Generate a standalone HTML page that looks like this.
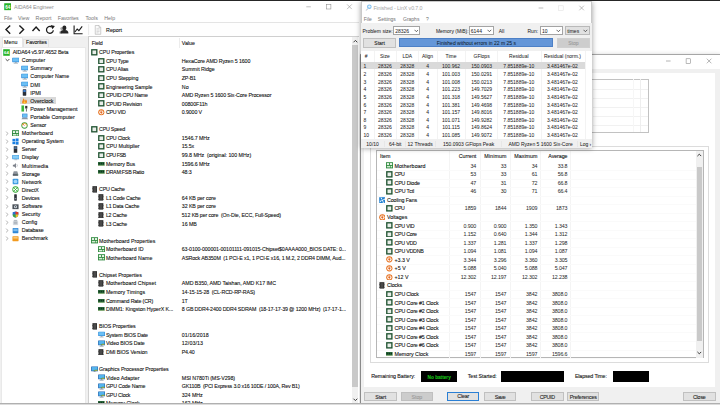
<!DOCTYPE html>
<html><head><meta charset="utf-8"><title>AIDA64 Engineer</title>
<style>
html,body{margin:0;padding:0;background:#fff;}
body{width:720px;height:405px;overflow:hidden;position:relative;font-family:"Liberation Sans",sans-serif;font-size:5.3px;color:#1c1c1c;}
.t{position:absolute;white-space:nowrap;line-height:8px;height:8px;-webkit-text-stroke:0.09px currentColor;text-shadow:0 0 0.4px rgba(0,0,0,.18);}
.r{position:absolute;box-sizing:border-box;}
.i{position:absolute;display:block;}
.g{color:#8e8e8e;-webkit-text-stroke:0;text-shadow:none;}
.m{color:#767676;-webkit-text-stroke:0;text-shadow:none;}
.btn{position:absolute;box-sizing:border-box;background:#e1e1e1;border:0.6px solid #c0c0c0;text-align:center;line-height:8px;white-space:nowrap;}
.win{position:absolute;box-sizing:border-box;overflow:hidden;}
.n{font-size:5.3px;}
.nn{-webkit-text-stroke:0.03px currentColor;text-shadow:none;color:#2a2a2a;}
.bt{-webkit-text-stroke:0.09px currentColor;}
.lx{-webkit-text-stroke:0.03px currentColor;text-shadow:none;font-size:5.0px;font-family:"Liberation Sans",sans-serif;}
</style></head><body>

<div class="win" style="left:359.5px;top:54px;width:361px;height:350px;background:#f0f0f0;border:1px solid #a6a6a6;border-left-color:#8a8a8a;box-shadow:0 1px 5px rgba(0,0,0,.22);"></div>
<div class="r " style="left:360.50px;top:55.00px;width:360.00px;height:14.20px;background:#fff;"></div>
<svg class="i" style="left:660px;top:56px;width:60px;height:12px" viewBox="0 0 60 12"><path d="M6.0 5.0 H10.6" stroke="#777" stroke-width="0.55" fill="none"/><rect x="26.1" y="2.8" width="4.5" height="4.5" stroke="#777" stroke-width="0.5" fill="none"/><path d="M46.8 2.7 L51.4 7.3 M51.4 2.7 L46.8 7.3" stroke="#777" stroke-width="0.55" fill="none"/></svg>
<div class="r " style="left:363.50px;top:73.00px;width:351.70px;height:314.30px;background:#fff;"></div>
<div class="r " style="left:370.00px;top:78.80px;width:278.80px;height:54.00px;background:#fff;border:0.6px solid #c2c2c2;"></div>
<div class="r " style="left:593.00px;top:89.30px;width:55.20px;height:0.50px;background:#f1f1f1;"></div>
<div class="r " style="left:593.00px;top:98.40px;width:55.20px;height:0.50px;background:#f1f1f1;"></div>
<div class="r " style="left:593.00px;top:107.20px;width:55.20px;height:0.50px;background:#f1f1f1;"></div>
<div class="r " style="left:593.00px;top:116.00px;width:55.20px;height:0.50px;background:#f1f1f1;"></div>
<div class="r " style="left:593.00px;top:124.90px;width:55.20px;height:0.50px;background:#f1f1f1;"></div>
<div class="r " style="left:640.00px;top:79.00px;width:0.50px;height:53.00px;background:#eeeeee;"></div>
<div class="r " style="left:632.70px;top:79.00px;width:0.50px;height:53.00px;background:#f6f6f6;"></div>
<div class="r " style="left:370.00px;top:145.60px;width:338.80px;height:217.60px;border:0.6px solid #dcdcdc;"></div>
<div class="r " style="left:376.00px;top:149.80px;width:327.50px;height:208.60px;background:#fff;border:0.6px solid #b6b6b6;"></div>
<div class="r " style="left:695.80px;top:150.50px;width:7.00px;height:207.20px;background:#f0f0f0;"></div>
<div class="r " style="left:696.60px;top:166.50px;width:5.80px;height:174.50px;background:#c9c9c9;"></div>
<svg class="i" style="left:696px;top:151px;width:6.6px;height:207px" viewBox="0 0 6.6 207"><path d="M1.4 5 L3.3 3.1 L5.2 5" stroke="#3c3c3c" stroke-width="1.0" fill="none"/><path d="M1.4 201 L3.3 202.9 L5.2 201" stroke="#3c3c3c" stroke-width="1.0" fill="none"/></svg>
<div class="r " style="left:449.00px;top:150.50px;width:0.50px;height:207.00px;background:#f4f4f4;"></div>
<div class="r " style="left:479.50px;top:150.50px;width:0.50px;height:207.00px;background:#f4f4f4;"></div>
<div class="r " style="left:509.80px;top:150.50px;width:0.50px;height:207.00px;background:#f4f4f4;"></div>
<div class="r " style="left:540.40px;top:150.50px;width:0.50px;height:207.00px;background:#f4f4f4;"></div>
<div class="r " style="left:570.00px;top:150.50px;width:0.50px;height:207.00px;background:#f4f4f4;"></div>
<div class="t " style="top:152.20px;left:380.00px;letter-spacing:0.058px;">Item</div>
<div class="t " style="top:152.20px;left:376.30px;width:100px;text-align:right;letter-spacing:-0.021px;margin-left:-0.021px;">Current</div>
<div class="t " style="top:152.20px;left:406.50px;width:100px;text-align:right;letter-spacing:0.135px;margin-left:0.135px;">Minimum</div>
<div class="t " style="top:152.20px;left:437.50px;width:100px;text-align:right;letter-spacing:0.046px;margin-left:0.046px;">Maximum</div>
<div class="t " style="top:152.20px;left:467.50px;width:100px;text-align:right;letter-spacing:-0.070px;margin-left:-0.070px;">Average</div>
<div class="r " style="left:376.70px;top:169.97px;width:319.00px;height:0.50px;background:#fafafa;"></div>
<svg class="i" style="left:386.20px;top:162.40px;width:7.00px;height:6.60px" viewBox="0 0 16 16" preserveAspectRatio="none"><rect x="0" y="0.5" width="16" height="15" fill="#2f8a3e"/><rect x="2" y="2.6" width="5" height="4.6" fill="#eaf6ea"/><rect x="9" y="2.6" width="5" height="4.6" fill="#eaf6ea"/><rect x="2" y="9.4" width="8" height="3.8" fill="#d4ecd4"/><rect x="11.4" y="9.4" width="2.6" height="3.8" fill="#d4ecd4"/></svg>
<div class="t " style="top:161.70px;left:394.50px;letter-spacing:0.100px;">Motherboard</div>
<div class="t n nn" style="top:161.70px;left:376.30px;width:100px;text-align:right;letter-spacing:-0.091px;margin-left:-0.091px;">34</div>
<div class="t n nn" style="top:161.70px;left:406.50px;width:100px;text-align:right;letter-spacing:-0.091px;margin-left:-0.091px;">33</div>
<div class="t n nn" style="top:161.70px;left:437.50px;width:100px;text-align:right;letter-spacing:-0.091px;margin-left:-0.091px;">34</div>
<div class="t n nn" style="top:161.70px;left:467.50px;width:100px;text-align:right;letter-spacing:-0.149px;margin-left:-0.149px;">33.8</div>
<div class="r " style="left:376.70px;top:178.53px;width:319.00px;height:0.50px;background:#fafafa;"></div>
<svg class="i" style="left:386.30px;top:170.90px;width:6.70px;height:6.70px" viewBox="0 0 16 16" preserveAspectRatio="none"><rect x="0.3" y="0.3" width="15.4" height="15.4" fill="#1f5230"/><rect x="3.5" y="3.5" width="9" height="9" fill="#e9eee9"/></svg>
<div class="t " style="top:170.25px;left:394.50px;letter-spacing:-0.434px;">CPU</div>
<div class="t n nn" style="top:170.25px;left:376.30px;width:100px;text-align:right;letter-spacing:-0.091px;margin-left:-0.091px;">53</div>
<div class="t n nn" style="top:170.25px;left:406.50px;width:100px;text-align:right;letter-spacing:-0.091px;margin-left:-0.091px;">33</div>
<div class="t n nn" style="top:170.25px;left:437.50px;width:100px;text-align:right;letter-spacing:-0.091px;margin-left:-0.091px;">61</div>
<div class="t n nn" style="top:170.25px;left:467.50px;width:100px;text-align:right;letter-spacing:-0.149px;margin-left:-0.149px;">56.8</div>
<div class="r " style="left:376.70px;top:187.07px;width:319.00px;height:0.50px;background:#fafafa;"></div>
<svg class="i" style="left:386.30px;top:179.45px;width:6.70px;height:6.70px" viewBox="0 0 16 16" preserveAspectRatio="none"><rect x="0.3" y="0.3" width="15.4" height="15.4" fill="#1f5230"/><rect x="3.5" y="3.5" width="9" height="9" fill="#e9eee9"/></svg>
<div class="t " style="top:178.80px;left:394.50px;letter-spacing:-0.131px;">CPU Diode</div>
<div class="t n nn" style="top:178.80px;left:376.30px;width:100px;text-align:right;letter-spacing:-0.091px;margin-left:-0.091px;">47</div>
<div class="t n nn" style="top:178.80px;left:406.50px;width:100px;text-align:right;letter-spacing:-0.091px;margin-left:-0.091px;">31</div>
<div class="t n nn" style="top:178.80px;left:437.50px;width:100px;text-align:right;letter-spacing:-0.091px;margin-left:-0.091px;">72</div>
<div class="t n nn" style="top:178.80px;left:467.50px;width:100px;text-align:right;letter-spacing:-0.149px;margin-left:-0.149px;">66.8</div>
<div class="r " style="left:376.70px;top:195.62px;width:319.00px;height:0.50px;background:#fafafa;"></div>
<svg class="i" style="left:386.30px;top:188.00px;width:6.70px;height:6.70px" viewBox="0 0 16 16" preserveAspectRatio="none"><rect x="0.3" y="0.3" width="15.4" height="15.4" fill="#1f5230"/><rect x="3.5" y="3.5" width="9" height="9" fill="#e9eee9"/></svg>
<div class="t " style="top:187.35px;left:394.50px;letter-spacing:-0.109px;">CPU Tctl</div>
<div class="t n nn" style="top:187.35px;left:376.30px;width:100px;text-align:right;letter-spacing:-0.091px;margin-left:-0.091px;">46</div>
<div class="t n nn" style="top:187.35px;left:406.50px;width:100px;text-align:right;letter-spacing:-0.091px;margin-left:-0.091px;">30</div>
<div class="t n nn" style="top:187.35px;left:437.50px;width:100px;text-align:right;letter-spacing:-0.091px;margin-left:-0.091px;">71</div>
<div class="t n nn" style="top:187.35px;left:467.50px;width:100px;text-align:right;letter-spacing:-0.149px;margin-left:-0.149px;">66.4</div>
<div class="r " style="left:376.70px;top:204.17px;width:319.00px;height:0.50px;background:#fafafa;"></div>
<svg class="i" style="left:378.80px;top:196.55px;width:6.70px;height:6.70px" viewBox="0 0 16 16" preserveAspectRatio="none"><rect x="0.5" y="0.5" width="15" height="15" fill="#1f7fd0"/><path d="M8 8 L3 2 L7 2 Z M8 8 L14 3 L14 7 Z M8 8 L13 14 L9 14 Z M8 8 L2 13 L2 9 Z" fill="#e8f4ff"/><circle cx="8" cy="8" r="1.6" fill="#fff"/></svg>
<div class="t " style="top:195.90px;left:387.00px;letter-spacing:-0.089px;">Cooling Fans</div>
<div class="r " style="left:376.70px;top:212.72px;width:319.00px;height:0.50px;background:#fafafa;"></div>
<svg class="i" style="left:386.30px;top:205.10px;width:6.70px;height:6.70px" viewBox="0 0 16 16" preserveAspectRatio="none"><rect x="0.3" y="0.3" width="15.4" height="15.4" fill="#1f5230"/><rect x="3.5" y="3.5" width="9" height="9" fill="#e9eee9"/></svg>
<div class="t " style="top:204.45px;left:394.50px;letter-spacing:-0.434px;">CPU</div>
<div class="t n nn" style="top:204.45px;left:376.30px;width:100px;text-align:right;letter-spacing:-0.091px;margin-left:-0.091px;">1859</div>
<div class="t n nn" style="top:204.45px;left:406.50px;width:100px;text-align:right;letter-spacing:-0.091px;margin-left:-0.091px;">1844</div>
<div class="t n nn" style="top:204.45px;left:437.50px;width:100px;text-align:right;letter-spacing:-0.091px;margin-left:-0.091px;">1909</div>
<div class="t n nn" style="top:204.45px;left:467.50px;width:100px;text-align:right;letter-spacing:-0.091px;margin-left:-0.091px;">1873</div>
<div class="r " style="left:376.70px;top:221.28px;width:319.00px;height:0.50px;background:#fafafa;"></div>
<svg class="i" style="left:378.80px;top:213.65px;width:6.70px;height:6.70px" viewBox="0 0 16 16" preserveAspectRatio="none"><circle cx="8" cy="8" r="7.4" fill="#e66f1c"/><circle cx="8" cy="8" r="5.2" fill="#fdf1e6"/><path d="M8.6 2.6 L4.6 9 H7.6 L6.8 13.4 L11.4 6.8 H8.4 Z" fill="#e0601a"/></svg>
<div class="t " style="top:213.00px;left:387.00px;letter-spacing:-0.001px;">Voltages</div>
<div class="r " style="left:376.70px;top:229.83px;width:319.00px;height:0.50px;background:#fafafa;"></div>
<svg class="i" style="left:386.30px;top:222.20px;width:6.70px;height:6.70px" viewBox="0 0 16 16" preserveAspectRatio="none"><rect x="0.3" y="0.3" width="15.4" height="15.4" fill="#1f5230"/><rect x="3.5" y="3.5" width="9" height="9" fill="#e9eee9"/></svg>
<div class="t " style="top:221.55px;left:394.50px;letter-spacing:-0.247px;">CPU VID</div>
<div class="t n nn" style="top:221.55px;left:376.30px;width:100px;text-align:right;letter-spacing:-0.137px;margin-left:-0.137px;">0.900</div>
<div class="t n nn" style="top:221.55px;left:406.50px;width:100px;text-align:right;letter-spacing:-0.137px;margin-left:-0.137px;">0.900</div>
<div class="t n nn" style="top:221.55px;left:437.50px;width:100px;text-align:right;letter-spacing:-0.137px;margin-left:-0.137px;">1.350</div>
<div class="t n nn" style="top:221.55px;left:467.50px;width:100px;text-align:right;letter-spacing:-0.137px;margin-left:-0.137px;">1.343</div>
<div class="r " style="left:376.70px;top:238.38px;width:319.00px;height:0.50px;background:#fafafa;"></div>
<svg class="i" style="left:386.30px;top:230.75px;width:6.70px;height:6.70px" viewBox="0 0 16 16" preserveAspectRatio="none"><rect x="0.3" y="0.3" width="15.4" height="15.4" fill="#1f5230"/><rect x="3.5" y="3.5" width="9" height="9" fill="#e9eee9"/></svg>
<div class="t " style="top:230.10px;left:394.50px;letter-spacing:-0.226px;">CPU Core</div>
<div class="t n nn" style="top:230.10px;left:376.30px;width:100px;text-align:right;letter-spacing:-0.137px;margin-left:-0.137px;">1.152</div>
<div class="t n nn" style="top:230.10px;left:406.50px;width:100px;text-align:right;letter-spacing:-0.137px;margin-left:-0.137px;">0.640</div>
<div class="t n nn" style="top:230.10px;left:437.50px;width:100px;text-align:right;letter-spacing:-0.137px;margin-left:-0.137px;">1.344</div>
<div class="t n nn" style="top:230.10px;left:467.50px;width:100px;text-align:right;letter-spacing:-0.137px;margin-left:-0.137px;">1.312</div>
<div class="r " style="left:376.70px;top:246.92px;width:319.00px;height:0.50px;background:#fafafa;"></div>
<svg class="i" style="left:386.30px;top:239.30px;width:6.70px;height:6.70px" viewBox="0 0 16 16" preserveAspectRatio="none"><rect x="0.3" y="0.3" width="15.4" height="15.4" fill="#1f5230"/><rect x="3.5" y="3.5" width="9" height="9" fill="#e9eee9"/></svg>
<div class="t " style="top:238.65px;left:394.50px;letter-spacing:-0.254px;">CPU VDD</div>
<div class="t n nn" style="top:238.65px;left:376.30px;width:100px;text-align:right;letter-spacing:-0.137px;margin-left:-0.137px;">1.337</div>
<div class="t n nn" style="top:238.65px;left:406.50px;width:100px;text-align:right;letter-spacing:-0.137px;margin-left:-0.137px;">1.281</div>
<div class="t n nn" style="top:238.65px;left:437.50px;width:100px;text-align:right;letter-spacing:-0.137px;margin-left:-0.137px;">1.337</div>
<div class="t n nn" style="top:238.65px;left:467.50px;width:100px;text-align:right;letter-spacing:-0.137px;margin-left:-0.137px;">1.298</div>
<div class="r " style="left:376.70px;top:255.47px;width:319.00px;height:0.50px;background:#fafafa;"></div>
<svg class="i" style="left:386.30px;top:247.85px;width:6.70px;height:6.70px" viewBox="0 0 16 16" preserveAspectRatio="none"><rect x="0.3" y="0.3" width="15.4" height="15.4" fill="#1f5230"/><rect x="3.5" y="3.5" width="9" height="9" fill="#e9eee9"/></svg>
<div class="t " style="top:247.20px;left:394.50px;letter-spacing:-0.238px;">CPU VDDNB</div>
<div class="t n nn" style="top:247.20px;left:376.30px;width:100px;text-align:right;letter-spacing:-0.137px;margin-left:-0.137px;">1.094</div>
<div class="t n nn" style="top:247.20px;left:406.50px;width:100px;text-align:right;letter-spacing:-0.137px;margin-left:-0.137px;">1.081</div>
<div class="t n nn" style="top:247.20px;left:437.50px;width:100px;text-align:right;letter-spacing:-0.137px;margin-left:-0.137px;">1.094</div>
<div class="t n nn" style="top:247.20px;left:467.50px;width:100px;text-align:right;letter-spacing:-0.137px;margin-left:-0.137px;">1.087</div>
<div class="r " style="left:376.70px;top:264.02px;width:319.00px;height:0.50px;background:#fafafa;"></div>
<svg class="i" style="left:386.30px;top:256.40px;width:6.70px;height:6.70px" viewBox="0 0 16 16" preserveAspectRatio="none"><circle cx="8" cy="8" r="7.4" fill="#e66f1c"/><circle cx="8" cy="8" r="5.2" fill="#fdf1e6"/><path d="M8.6 2.6 L4.6 9 H7.6 L6.8 13.4 L11.4 6.8 H8.4 Z" fill="#e0601a"/></svg>
<div class="t " style="top:255.75px;left:394.50px;letter-spacing:-0.038px;">+3.3 V</div>
<div class="t n nn" style="top:255.75px;left:376.30px;width:100px;text-align:right;letter-spacing:-0.137px;margin-left:-0.137px;">3.344</div>
<div class="t n nn" style="top:255.75px;left:406.50px;width:100px;text-align:right;letter-spacing:-0.137px;margin-left:-0.137px;">3.296</div>
<div class="t n nn" style="top:255.75px;left:437.50px;width:100px;text-align:right;letter-spacing:-0.137px;margin-left:-0.137px;">3.360</div>
<div class="t n nn" style="top:255.75px;left:467.50px;width:100px;text-align:right;letter-spacing:-0.137px;margin-left:-0.137px;">3.305</div>
<div class="r " style="left:376.70px;top:272.57px;width:319.00px;height:0.50px;background:#fafafa;"></div>
<svg class="i" style="left:386.30px;top:264.95px;width:6.70px;height:6.70px" viewBox="0 0 16 16" preserveAspectRatio="none"><circle cx="8" cy="8" r="7.4" fill="#e66f1c"/><circle cx="8" cy="8" r="5.2" fill="#fdf1e6"/><path d="M8.6 2.6 L4.6 9 H7.6 L6.8 13.4 L11.4 6.8 H8.4 Z" fill="#e0601a"/></svg>
<div class="t " style="top:264.30px;left:394.50px;letter-spacing:0.047px;">+5 V</div>
<div class="t n nn" style="top:264.30px;left:376.30px;width:100px;text-align:right;letter-spacing:-0.137px;margin-left:-0.137px;">5.088</div>
<div class="t n nn" style="top:264.30px;left:406.50px;width:100px;text-align:right;letter-spacing:-0.137px;margin-left:-0.137px;">5.040</div>
<div class="t n nn" style="top:264.30px;left:437.50px;width:100px;text-align:right;letter-spacing:-0.137px;margin-left:-0.137px;">5.088</div>
<div class="t n nn" style="top:264.30px;left:467.50px;width:100px;text-align:right;letter-spacing:-0.137px;margin-left:-0.137px;">5.047</div>
<div class="r " style="left:376.70px;top:281.12px;width:319.00px;height:0.50px;background:#fafafa;"></div>
<svg class="i" style="left:386.30px;top:273.50px;width:6.70px;height:6.70px" viewBox="0 0 16 16" preserveAspectRatio="none"><circle cx="8" cy="8" r="7.4" fill="#e66f1c"/><circle cx="8" cy="8" r="5.2" fill="#fdf1e6"/><path d="M8.6 2.6 L4.6 9 H7.6 L6.8 13.4 L11.4 6.8 H8.4 Z" fill="#e0601a"/></svg>
<div class="t " style="top:272.85px;left:394.50px;letter-spacing:0.020px;">+12 V</div>
<div class="t n nn" style="top:272.85px;left:376.30px;width:100px;text-align:right;letter-spacing:-0.129px;margin-left:-0.129px;">12.302</div>
<div class="t n nn" style="top:272.85px;left:406.50px;width:100px;text-align:right;letter-spacing:-0.129px;margin-left:-0.129px;">12.197</div>
<div class="t n nn" style="top:272.85px;left:437.50px;width:100px;text-align:right;letter-spacing:-0.129px;margin-left:-0.129px;">12.302</div>
<div class="t n nn" style="top:272.85px;left:467.50px;width:100px;text-align:right;letter-spacing:-0.129px;margin-left:-0.129px;">12.238</div>
<div class="r " style="left:376.70px;top:289.67px;width:319.00px;height:0.50px;background:#fafafa;"></div>
<svg class="i" style="left:379.20px;top:282.00px;width:5.80px;height:6.80px" viewBox="0 0 16 16" preserveAspectRatio="none"><rect x="1.8" y="0.5" width="12.4" height="15" fill="#2b2b2b"/><rect x="0.2" y="1.6" width="15.6" height="1.7" fill="#3d3d3d"/><rect x="0.2" y="5" width="15.6" height="1.7" fill="#3d3d3d"/><rect x="0.2" y="8.4" width="15.6" height="1.7" fill="#3d3d3d"/><rect x="0.2" y="11.8" width="15.6" height="1.7" fill="#3d3d3d"/><rect x="4.6" y="2.5" width="6.8" height="11" fill="#4a4a4a"/></svg>
<div class="t " style="top:281.40px;left:387.00px;letter-spacing:-0.150px;">Clocks</div>
<div class="r " style="left:376.70px;top:298.22px;width:319.00px;height:0.50px;background:#fafafa;"></div>
<svg class="i" style="left:386.30px;top:290.60px;width:6.70px;height:6.70px" viewBox="0 0 16 16" preserveAspectRatio="none"><rect x="0.3" y="0.3" width="15.4" height="15.4" fill="#1f5230"/><rect x="3.5" y="3.5" width="9" height="9" fill="#e9eee9"/></svg>
<div class="t " style="top:289.95px;left:394.50px;letter-spacing:-0.202px;">CPU Clock</div>
<div class="t n nn" style="top:289.95px;left:376.30px;width:100px;text-align:right;letter-spacing:-0.091px;margin-left:-0.091px;">1547</div>
<div class="t n nn" style="top:289.95px;left:406.50px;width:100px;text-align:right;letter-spacing:-0.091px;margin-left:-0.091px;">1547</div>
<div class="t n nn" style="top:289.95px;left:437.50px;width:100px;text-align:right;letter-spacing:-0.091px;margin-left:-0.091px;">3842</div>
<div class="t n nn" style="top:289.95px;left:467.50px;width:100px;text-align:right;letter-spacing:-0.129px;margin-left:-0.129px;">3808.0</div>
<div class="r " style="left:376.70px;top:306.77px;width:319.00px;height:0.50px;background:#fafafa;"></div>
<svg class="i" style="left:386.30px;top:299.15px;width:6.70px;height:6.70px" viewBox="0 0 16 16" preserveAspectRatio="none"><rect x="0.3" y="0.3" width="15.4" height="15.4" fill="#1f5230"/><rect x="3.5" y="3.5" width="9" height="9" fill="#e9eee9"/></svg>
<div class="t " style="top:298.50px;left:394.50px;letter-spacing:-0.133px;">CPU Core #1 Clock</div>
<div class="t n nn" style="top:298.50px;left:376.30px;width:100px;text-align:right;letter-spacing:-0.091px;margin-left:-0.091px;">1547</div>
<div class="t n nn" style="top:298.50px;left:406.50px;width:100px;text-align:right;letter-spacing:-0.091px;margin-left:-0.091px;">1547</div>
<div class="t n nn" style="top:298.50px;left:437.50px;width:100px;text-align:right;letter-spacing:-0.091px;margin-left:-0.091px;">3842</div>
<div class="t n nn" style="top:298.50px;left:467.50px;width:100px;text-align:right;letter-spacing:-0.129px;margin-left:-0.129px;">3808.0</div>
<div class="r " style="left:376.70px;top:315.32px;width:319.00px;height:0.50px;background:#fafafa;"></div>
<svg class="i" style="left:386.30px;top:307.70px;width:6.70px;height:6.70px" viewBox="0 0 16 16" preserveAspectRatio="none"><rect x="0.3" y="0.3" width="15.4" height="15.4" fill="#1f5230"/><rect x="3.5" y="3.5" width="9" height="9" fill="#e9eee9"/></svg>
<div class="t " style="top:307.05px;left:394.50px;letter-spacing:-0.133px;">CPU Core #2 Clock</div>
<div class="t n nn" style="top:307.05px;left:376.30px;width:100px;text-align:right;letter-spacing:-0.091px;margin-left:-0.091px;">1547</div>
<div class="t n nn" style="top:307.05px;left:406.50px;width:100px;text-align:right;letter-spacing:-0.091px;margin-left:-0.091px;">1547</div>
<div class="t n nn" style="top:307.05px;left:437.50px;width:100px;text-align:right;letter-spacing:-0.091px;margin-left:-0.091px;">3842</div>
<div class="t n nn" style="top:307.05px;left:467.50px;width:100px;text-align:right;letter-spacing:-0.129px;margin-left:-0.129px;">3808.0</div>
<div class="r " style="left:376.70px;top:323.88px;width:319.00px;height:0.50px;background:#fafafa;"></div>
<svg class="i" style="left:386.30px;top:316.25px;width:6.70px;height:6.70px" viewBox="0 0 16 16" preserveAspectRatio="none"><rect x="0.3" y="0.3" width="15.4" height="15.4" fill="#1f5230"/><rect x="3.5" y="3.5" width="9" height="9" fill="#e9eee9"/></svg>
<div class="t " style="top:315.60px;left:394.50px;letter-spacing:-0.133px;">CPU Core #3 Clock</div>
<div class="t n nn" style="top:315.60px;left:376.30px;width:100px;text-align:right;letter-spacing:-0.091px;margin-left:-0.091px;">1547</div>
<div class="t n nn" style="top:315.60px;left:406.50px;width:100px;text-align:right;letter-spacing:-0.091px;margin-left:-0.091px;">1547</div>
<div class="t n nn" style="top:315.60px;left:437.50px;width:100px;text-align:right;letter-spacing:-0.091px;margin-left:-0.091px;">3842</div>
<div class="t n nn" style="top:315.60px;left:467.50px;width:100px;text-align:right;letter-spacing:-0.129px;margin-left:-0.129px;">3808.0</div>
<div class="r " style="left:376.70px;top:332.42px;width:319.00px;height:0.50px;background:#fafafa;"></div>
<svg class="i" style="left:386.30px;top:324.80px;width:6.70px;height:6.70px" viewBox="0 0 16 16" preserveAspectRatio="none"><rect x="0.3" y="0.3" width="15.4" height="15.4" fill="#1f5230"/><rect x="3.5" y="3.5" width="9" height="9" fill="#e9eee9"/></svg>
<div class="t " style="top:324.15px;left:394.50px;letter-spacing:-0.133px;">CPU Core #4 Clock</div>
<div class="t n nn" style="top:324.15px;left:376.30px;width:100px;text-align:right;letter-spacing:-0.091px;margin-left:-0.091px;">1547</div>
<div class="t n nn" style="top:324.15px;left:406.50px;width:100px;text-align:right;letter-spacing:-0.091px;margin-left:-0.091px;">1547</div>
<div class="t n nn" style="top:324.15px;left:437.50px;width:100px;text-align:right;letter-spacing:-0.091px;margin-left:-0.091px;">3842</div>
<div class="t n nn" style="top:324.15px;left:467.50px;width:100px;text-align:right;letter-spacing:-0.129px;margin-left:-0.129px;">3808.0</div>
<div class="r " style="left:376.70px;top:340.97px;width:319.00px;height:0.50px;background:#fafafa;"></div>
<svg class="i" style="left:386.30px;top:333.35px;width:6.70px;height:6.70px" viewBox="0 0 16 16" preserveAspectRatio="none"><rect x="0.3" y="0.3" width="15.4" height="15.4" fill="#1f5230"/><rect x="3.5" y="3.5" width="9" height="9" fill="#e9eee9"/></svg>
<div class="t " style="top:332.70px;left:394.50px;letter-spacing:-0.133px;">CPU Core #5 Clock</div>
<div class="t n nn" style="top:332.70px;left:376.30px;width:100px;text-align:right;letter-spacing:-0.091px;margin-left:-0.091px;">1547</div>
<div class="t n nn" style="top:332.70px;left:406.50px;width:100px;text-align:right;letter-spacing:-0.091px;margin-left:-0.091px;">1547</div>
<div class="t n nn" style="top:332.70px;left:437.50px;width:100px;text-align:right;letter-spacing:-0.091px;margin-left:-0.091px;">3842</div>
<div class="t n nn" style="top:332.70px;left:467.50px;width:100px;text-align:right;letter-spacing:-0.129px;margin-left:-0.129px;">3808.0</div>
<div class="r " style="left:376.70px;top:349.52px;width:319.00px;height:0.50px;background:#fafafa;"></div>
<svg class="i" style="left:386.30px;top:341.90px;width:6.70px;height:6.70px" viewBox="0 0 16 16" preserveAspectRatio="none"><rect x="0.3" y="0.3" width="15.4" height="15.4" fill="#1f5230"/><rect x="3.5" y="3.5" width="9" height="9" fill="#e9eee9"/></svg>
<div class="t " style="top:341.25px;left:394.50px;letter-spacing:-0.133px;">CPU Core #6 Clock</div>
<div class="t n nn" style="top:341.25px;left:376.30px;width:100px;text-align:right;letter-spacing:-0.091px;margin-left:-0.091px;">1547</div>
<div class="t n nn" style="top:341.25px;left:406.50px;width:100px;text-align:right;letter-spacing:-0.091px;margin-left:-0.091px;">1547</div>
<div class="t n nn" style="top:341.25px;left:437.50px;width:100px;text-align:right;letter-spacing:-0.091px;margin-left:-0.091px;">3842</div>
<div class="t n nn" style="top:341.25px;left:467.50px;width:100px;text-align:right;letter-spacing:-0.129px;margin-left:-0.129px;">3808.0</div>
<div class="r " style="left:376.70px;top:358.07px;width:319.00px;height:0.50px;background:#fafafa;"></div>
<svg class="i" style="left:386.30px;top:351.90px;width:6.60px;height:4.20px" viewBox="0 0 16 16" preserveAspectRatio="none"><rect x="0" y="0" width="16" height="13" fill="#2c6a3e"/><rect x="0" y="13" width="16" height="3" fill="#6c9a55"/><rect x="1.5" y="3" width="3" height="6" fill="#0f3319"/><rect x="6.5" y="3" width="3" height="6" fill="#0f3319"/><rect x="11.5" y="3" width="3" height="6" fill="#0f3319"/></svg>
<div class="t " style="top:349.80px;left:394.50px;letter-spacing:-0.005px;">Memory Clock</div>
<div class="t n nn" style="top:349.80px;left:376.30px;width:100px;text-align:right;letter-spacing:-0.091px;margin-left:-0.091px;">1597</div>
<div class="t n nn" style="top:349.80px;left:406.50px;width:100px;text-align:right;letter-spacing:-0.091px;margin-left:-0.091px;">1597</div>
<div class="t n nn" style="top:349.80px;left:437.50px;width:100px;text-align:right;letter-spacing:-0.091px;margin-left:-0.091px;">1597</div>
<div class="t n nn" style="top:349.80px;left:467.50px;width:100px;text-align:right;letter-spacing:-0.129px;margin-left:-0.129px;">1596.6</div>
<div class="t " style="top:372.30px;left:371.20px;letter-spacing:-0.061px;">Remaining Battery:</div>
<div class="r " style="left:421.00px;top:371.00px;width:36.40px;height:10.60px;background:#000;"></div>
<div class="t " style="top:374.00px;left:389.20px;width:100px;text-align:center;color:#17c417;font-weight:bold;font-size:4.7px;">No battery</div>
<div class="t " style="top:372.30px;left:467.70px;letter-spacing:-0.056px;">Test Started:</div>
<div class="r " style="left:501.30px;top:371.00px;width:63.20px;height:10.60px;background:#000;"></div>
<div class="t " style="top:372.30px;left:574.90px;letter-spacing:-0.129px;">Elapsed Time:</div>
<div class="r " style="left:613.00px;top:371.00px;width:36.20px;height:10.60px;background:#000;"></div>
<div class="btn" style="left:364.40px;top:391.80px;width:32.60px;height:8.90px;"><span class="bt" style="letter-spacing:-0.050px;">Start</span></div>
<div class="btn" style="left:400.50px;top:391.80px;width:32.70px;height:8.90px;background:#cccccc;border-color:#bfbfbf;color:#9a9a9a;"><span class="bt" style="letter-spacing:-0.018px;">Stop</span></div>
<div class="btn" style="left:446.90px;top:391.80px;width:32.60px;height:8.90px;border:1px solid #2a7fd4;line-height:7.4px;"><span class="bt" style="letter-spacing:-0.158px;">Clear</span></div>
<div class="btn" style="left:483.90px;top:391.80px;width:32.40px;height:8.90px;"><span class="bt" style="letter-spacing:-0.315px;">Save</span></div>
<div class="btn" style="left:530.80px;top:391.80px;width:33.00px;height:8.90px;"><span class="bt" style="letter-spacing:-0.295px;">CPUID</span></div>
<div class="btn" style="left:567.20px;top:391.80px;width:32.00px;height:8.90px;"><span class="bt" style="letter-spacing:-0.135px;">Preferences</span></div>
<div class="btn" style="left:682.80px;top:391.80px;width:33.00px;height:8.90px;"><span class="bt" style="letter-spacing:-0.172px;">Close</span></div>
<div class="win" style="left:0;top:0;width:359.3px;height:405px;background:#fff;"></div>
<div class="r " style="left:0.00px;top:0.00px;width:720.00px;height:1.00px;background:#262626;"></div>
<svg class="i" style="left:3.60px;top:3.20px;width:7.40px;height:7.40px" viewBox="0 0 16 16" preserveAspectRatio="none"><rect x="0.5" y="0.5" width="15" height="15" fill="#26b326"/><text x="8" y="12" font-family="Liberation Sans" font-weight="bold" font-size="10" fill="#fff" text-anchor="middle">64</text></svg>
<div class="t g" style="top:2.90px;left:14.00px;letter-spacing:-0.091px;">AIDA64 Engineer</div>
<svg class="i" style="left:300px;top:1px;width:60px;height:12px" viewBox="0 0 60 12"><path d="M6.3 5.8 H10.8" stroke="#8a8a8a" stroke-width="0.55" fill="none"/><rect x="26.4" y="3.5" width="4.5" height="4.5" stroke="#8a8a8a" stroke-width="0.55" fill="none"/><path d="M47.1 3.4 L51.8 8.1 M51.8 3.4 L47.1 8.1" stroke="#8a8a8a" stroke-width="0.55" fill="none"/></svg>
<div class="t m" style="top:14.30px;left:4.00px;letter-spacing:-0.154px;">File</div>
<div class="t m" style="top:14.30px;left:18.00px;letter-spacing:-0.052px;">View</div>
<div class="t m" style="top:14.30px;left:35.60px;letter-spacing:-0.018px;">Report</div>
<div class="t m" style="top:14.30px;left:57.80px;letter-spacing:-0.103px;">Favorites</div>
<div class="t m" style="top:14.30px;left:85.40px;letter-spacing:0.030px;">Tools</div>
<div class="t m" style="top:14.30px;left:104.20px;letter-spacing:0.008px;">Help</div>
<div class="r " style="left:0.00px;top:22.10px;width:359.00px;height:0.50px;background:#e4e4e4;"></div>
<div class="r " style="left:0.00px;top:22.60px;width:359.00px;height:13.80px;background:#fefefe;"></div>
<svg class="i" style="left:0;top:23px;width:130px;height:13px" viewBox="0 0 130 13">
<g stroke="#1b1b1b" stroke-width="1.4" fill="none" stroke-linecap="butt">
<path d="M10.2 2.5 L6.0 6.6 L10.2 10.7"/>
<path d="M19.4 2.5 L23.6 6.6 L19.4 10.7"/>
<path d="M32.5 8.0 L36.1 4.1 L39.7 8.0"/>
<path d="M51.6 3.9 A3.4 3.4 0 1 0 53.3 7.2" stroke-width="1.25"/>
<path d="M74.1 2.4 V10.7 H82.6" stroke-width="1.1"/>
<path d="M74.9 9.0 L77.2 6.0 L78.9 7.6 L82.2 3.4" stroke-width="1.1"/>
</g>
<path d="M50.6 1.9 L54.9 3.0 L52.4 6.3 Z" fill="#1b1b1b"/>
<g fill="#8d8d8d" opacity="0.75"><circle cx="62.0" cy="5.6" r="1.7"/><path d="M59.2 10.6 C59.2 8.2 60.2 7.6 62 7.6 L62 10.6 Z"/></g>
<g fill="#262626"><ellipse cx="64.4" cy="4.9" rx="2.0" ry="2.4"/><path d="M60.4 10.6 C60.4 7.6 62 7.0 64.4 7.0 C66.8 7.0 68.4 7.6 68.4 10.6 Z"/></g>
<path d="M88.6 1.2 V12" stroke="#d4d4d4" stroke-width="0.5"/>
</svg>
<svg class="i" style="left:94.00px;top:24.90px;width:8.00px;height:9.80px" viewBox="0 0 16 16" preserveAspectRatio="none"><path d="M2.5 0.8 H10 L13.5 4.3 V15.2 H2.5 Z" fill="#fafafa" stroke="#a8a8a8" stroke-width="1.0"/><path d="M5 6 H11 M5 8.3 H11 M5 10.6 H11 M5 12.8 H9" stroke="#bdbdbd" stroke-width="0.9"/><path d="M10 0.8 V4.3 H13.5" fill="none" stroke="#a8a8a8" stroke-width="0.8"/></svg>
<div class="t " style="top:25.70px;left:106.10px;letter-spacing:-0.018px;">Report</div>
<div class="r " style="left:0.00px;top:36.40px;width:88.50px;height:368.60px;background:#f0f0f0;"></div>
<div class="r " style="left:22.60px;top:38.60px;width:26.20px;height:8.80px;background:#f1f1f1;border:0.5px solid #e2e2e2;border-bottom:none;"></div>
<div class="r " style="left:1.60px;top:37.20px;width:21.20px;height:10.50px;background:#fff;border:0.5px solid #e6e6e6;border-bottom:none;"></div>
<div class="t " style="top:37.70px;left:4.00px;letter-spacing:0.067px;">Menu</div>
<div class="t " style="top:38.30px;left:26.00px;letter-spacing:-0.103px;">Favorites</div>
<div class="r " style="left:1.40px;top:47.20px;width:85.00px;height:358.00px;background:#fff;border:0.5px solid #e9e9e9;"></div>
<svg class="i" style="left:3.40px;top:48.60px;width:7.00px;height:7.00px" viewBox="0 0 16 16" preserveAspectRatio="none"><rect x="0.5" y="0.5" width="15" height="15" fill="#26b326"/><text x="8" y="12" font-family="Liberation Sans" font-weight="bold" font-size="10" fill="#fff" text-anchor="middle">64</text></svg>
<div class="t " style="top:48.10px;left:12.70px;letter-spacing:-0.119px;">AIDA64 v5.97.4652 Beta</div>
<svg class="i" style="left:11.60px;top:56.70px;width:7.60px;height:7.00px" viewBox="0 0 16 16" preserveAspectRatio="none"><rect x="0.5" y="1.5" width="15" height="10.5" rx="1" fill="#2f8ad8"/><rect x="1.8" y="2.8" width="12.4" height="7.6" fill="#6cc0f5"/><rect x="6" y="12" width="4" height="1.6" fill="#8a98a5"/><rect x="3.5" y="13.4" width="9" height="1.6" fill="#9aa7b3"/></svg>
<div class="t " style="top:56.20px;left:21.80px;letter-spacing:0.025px;">Computer</div>
<svg class="i" style="left:4.6px;top:58.20px;width:5px;height:4px" viewBox="0 0 5 4"><path d="M0.6 1.0 L2.5 2.9 L4.4 1.0" stroke="#333" stroke-width="0.85" fill="none"/></svg>
<svg class="i" style="left:20.60px;top:64.80px;width:7.60px;height:7.00px" viewBox="0 0 16 16" preserveAspectRatio="none"><rect x="0.5" y="1.5" width="15" height="10.5" rx="1" fill="#2f8ad8"/><rect x="1.8" y="2.8" width="12.4" height="7.6" fill="#6cc0f5"/><rect x="6" y="12" width="4" height="1.6" fill="#8a98a5"/><rect x="3.5" y="13.4" width="9" height="1.6" fill="#9aa7b3"/></svg>
<div class="t " style="top:64.30px;left:30.30px;letter-spacing:-0.092px;">Summary</div>
<svg class="i" style="left:20.60px;top:72.90px;width:7.60px;height:7.00px" viewBox="0 0 16 16" preserveAspectRatio="none"><rect x="0.5" y="1.5" width="15" height="10.5" rx="1" fill="#2f8ad8"/><rect x="1.8" y="2.8" width="12.4" height="7.6" fill="#6cc0f5"/><rect x="6" y="12" width="4" height="1.6" fill="#8a98a5"/><rect x="3.5" y="13.4" width="9" height="1.6" fill="#9aa7b3"/></svg>
<div class="t " style="top:72.40px;left:30.30px;letter-spacing:0.003px;">Computer Name</div>
<svg class="i" style="left:20.60px;top:81.00px;width:7.60px;height:7.00px" viewBox="0 0 16 16" preserveAspectRatio="none"><rect x="0.5" y="1.5" width="15" height="10.5" rx="1" fill="#2f8ad8"/><rect x="1.8" y="2.8" width="12.4" height="7.6" fill="#6cc0f5"/><rect x="6" y="12" width="4" height="1.6" fill="#8a98a5"/><rect x="3.5" y="13.4" width="9" height="1.6" fill="#9aa7b3"/></svg>
<div class="t " style="top:80.50px;left:30.30px;letter-spacing:0.058px;">DMI</div>
<svg class="i" style="left:20.90px;top:89.10px;width:7.00px;height:7.00px" viewBox="0 0 16 16" preserveAspectRatio="none"><rect x="4" y="0.5" width="8" height="15" rx="1" fill="#2a2f3a"/><rect x="5.2" y="2" width="5.6" height="5" fill="#3f7fd0"/></svg>
<div class="t " style="top:88.60px;left:30.30px;letter-spacing:-0.086px;">IPMI</div>
<div class="r " style="left:20.10px;top:97.20px;width:35.60px;height:7.00px;background:#d9d9d9;"></div>
<svg class="i" style="left:20.90px;top:97.20px;width:7.00px;height:7.00px" viewBox="0 0 16 16" preserveAspectRatio="none"><path d="M3 15 C1 10 5 8 5 3 C8 5 8 8 9 9 C10 7 11 6 11 5 C15 9 14 13 12 15 Z" fill="#f08a1c"/><path d="M6 15 C5 12 7 11 8 9 C10 11 11 13 10 15 Z" fill="#ffd23a"/></svg>
<div class="t " style="top:96.70px;left:30.30px;letter-spacing:-0.055px;">Overclock</div>
<svg class="i" style="left:20.90px;top:105.30px;width:7.00px;height:7.00px" viewBox="0 0 16 16" preserveAspectRatio="none"><rect x="1" y="1" width="6" height="14" fill="#3db83d"/><rect x="9.5" y="2" width="5" height="6" fill="#333"/><rect x="11.3" y="8" width="1.6" height="7" fill="#333"/></svg>
<div class="t " style="top:104.80px;left:30.30px;letter-spacing:-0.019px;">Power Management</div>
<svg class="i" style="left:20.60px;top:113.40px;width:7.60px;height:7.00px" viewBox="0 0 16 16" preserveAspectRatio="none"><rect x="2.5" y="1.5" width="11" height="9" fill="#2f7fd0"/><rect x="3.7" y="2.7" width="8.6" height="6.4" fill="#6cc0f5"/><path d="M1 14.5 L3 10.8 H13 L15 14.5 Z" fill="#8a97a6"/></svg>
<div class="t " style="top:112.90px;left:30.30px;letter-spacing:0.001px;">Portable Computer</div>
<svg class="i" style="left:20.90px;top:121.50px;width:7.00px;height:7.00px" viewBox="0 0 16 16" preserveAspectRatio="none"><circle cx="8" cy="8" r="7.2" fill="#3b9b3b"/><circle cx="8" cy="8" r="5.4" fill="#fff"/><path d="M8 8 L4 4.5" stroke="#d22" stroke-width="1.6"/><path d="M3.2 8 A4.8 4.8 0 0 1 12.8 8" stroke="#f0a020" stroke-width="1.8" fill="none"/></svg>
<div class="t " style="top:121.00px;left:30.30px;letter-spacing:-0.169px;">Sensor</div>
<svg class="i" style="left:11.80px;top:129.70px;width:7.20px;height:6.80px" viewBox="0 0 16 16" preserveAspectRatio="none"><rect x="0" y="0.5" width="16" height="15" fill="#2f8a3e"/><rect x="2" y="2.6" width="5" height="4.6" fill="#eaf6ea"/><rect x="9" y="2.6" width="5" height="4.6" fill="#eaf6ea"/><rect x="2" y="9.4" width="8" height="3.8" fill="#d4ecd4"/><rect x="11.4" y="9.4" width="2.6" height="3.8" fill="#d4ecd4"/></svg>
<div class="t " style="top:129.10px;left:21.80px;letter-spacing:0.100px;">Motherboard</div>
<svg class="i" style="left:5px;top:130.60px;width:4px;height:5px" viewBox="0 0 4 5"><path d="M1.1 0.6 L3.0 2.5 L1.1 4.4" stroke="#8a8a8a" stroke-width="0.65" fill="none"/></svg>
<svg class="i" style="left:11.90px;top:137.70px;width:7.00px;height:7.00px" viewBox="0 0 16 16" preserveAspectRatio="none"><rect x="1" y="2" width="6.5" height="5.6" fill="#1b7fe0"/><rect x="8.5" y="1" width="6.5" height="6.6" fill="#1b7fe0"/><rect x="1" y="8.6" width="6.5" height="5.6" fill="#1b7fe0"/><rect x="8.5" y="8.6" width="6.5" height="6.6" fill="#1b7fe0"/></svg>
<div class="t " style="top:137.20px;left:21.80px;letter-spacing:-0.037px;">Operating System</div>
<svg class="i" style="left:5px;top:138.70px;width:4px;height:5px" viewBox="0 0 4 5"><path d="M1.1 0.6 L3.0 2.5 L1.1 4.4" stroke="#8a8a8a" stroke-width="0.65" fill="none"/></svg>
<svg class="i" style="left:11.90px;top:145.80px;width:7.00px;height:7.00px" viewBox="0 0 16 16" preserveAspectRatio="none"><rect x="4" y="0.5" width="8" height="15" fill="#2b2f36"/><rect x="5.2" y="2" width="5.6" height="1.4" fill="#6aa6e8"/><rect x="5.2" y="4.5" width="5.6" height="1.4" fill="#6aa6e8"/></svg>
<div class="t " style="top:145.30px;left:21.80px;letter-spacing:-0.172px;">Server</div>
<svg class="i" style="left:5px;top:146.80px;width:4px;height:5px" viewBox="0 0 4 5"><path d="M1.1 0.6 L3.0 2.5 L1.1 4.4" stroke="#8a8a8a" stroke-width="0.65" fill="none"/></svg>
<svg class="i" style="left:11.60px;top:153.90px;width:7.60px;height:7.00px" viewBox="0 0 16 16" preserveAspectRatio="none"><rect x="0.5" y="2" width="15" height="10" rx="1" fill="#3a94dc"/><rect x="1.8" y="3.2" width="12.4" height="7.4" fill="#86cdf7"/><rect x="5" y="12.5" width="6" height="1.5" fill="#98a3ae"/></svg>
<div class="t " style="top:153.40px;left:21.80px;letter-spacing:-0.067px;">Display</div>
<svg class="i" style="left:5px;top:154.90px;width:4px;height:5px" viewBox="0 0 4 5"><path d="M1.1 0.6 L3.0 2.5 L1.1 4.4" stroke="#8a8a8a" stroke-width="0.65" fill="none"/></svg>
<svg class="i" style="left:11.90px;top:162.00px;width:7.00px;height:7.00px" viewBox="0 0 16 16" preserveAspectRatio="none"><path d="M2 6 H5 L9 2 V14 L5 10 H2 Z" fill="#7a7f88"/><path d="M11 5 Q13.5 8 11 11" stroke="#9aa0a8" stroke-width="1.3" fill="none"/></svg>
<div class="t " style="top:161.50px;left:21.80px;letter-spacing:0.093px;">Multimedia</div>
<svg class="i" style="left:5px;top:163.00px;width:4px;height:5px" viewBox="0 0 4 5"><path d="M1.1 0.6 L3.0 2.5 L1.1 4.4" stroke="#8a8a8a" stroke-width="0.65" fill="none"/></svg>
<svg class="i" style="left:11.90px;top:170.10px;width:7.00px;height:7.00px" viewBox="0 0 16 16" preserveAspectRatio="none"><path d="M2 9 L4 3 H12 L14 9 V13 H2 Z" fill="#8d949c"/><rect x="2" y="9" width="12" height="4" fill="#5b626b"/><circle cx="12" cy="11" r="0.9" fill="#7fdc7f"/></svg>
<div class="t " style="top:169.60px;left:21.80px;letter-spacing:-0.060px;">Storage</div>
<svg class="i" style="left:5px;top:171.10px;width:4px;height:5px" viewBox="0 0 4 5"><path d="M1.1 0.6 L3.0 2.5 L1.1 4.4" stroke="#8a8a8a" stroke-width="0.65" fill="none"/></svg>
<svg class="i" style="left:11.90px;top:178.20px;width:7.00px;height:7.00px" viewBox="0 0 16 16" preserveAspectRatio="none"><rect x="1.5" y="1.5" width="13" height="13" rx="2" fill="#3e9ae0"/><circle cx="8" cy="8" r="4.2" fill="#9ed6fa"/></svg>
<div class="t " style="top:177.70px;left:21.80px;letter-spacing:0.072px;">Network</div>
<svg class="i" style="left:5px;top:179.20px;width:4px;height:5px" viewBox="0 0 4 5"><path d="M1.1 0.6 L3.0 2.5 L1.1 4.4" stroke="#8a8a8a" stroke-width="0.65" fill="none"/></svg>
<svg class="i" style="left:11.90px;top:186.30px;width:7.00px;height:7.00px" viewBox="0 0 16 16" preserveAspectRatio="none"><circle cx="8" cy="8" r="7.2" fill="#2fa82f"/><circle cx="8" cy="8" r="5.3" fill="#fff"/><path d="M4.5 4.5 L11.5 11.5 M11.5 4.5 L4.5 11.5" stroke="#2fa82f" stroke-width="1.8"/></svg>
<div class="t " style="top:185.80px;left:21.80px;letter-spacing:-0.056px;">DirectX</div>
<svg class="i" style="left:5px;top:187.30px;width:4px;height:5px" viewBox="0 0 4 5"><path d="M1.1 0.6 L3.0 2.5 L1.1 4.4" stroke="#8a8a8a" stroke-width="0.65" fill="none"/></svg>
<svg class="i" style="left:11.90px;top:194.40px;width:7.00px;height:7.00px" viewBox="0 0 16 16" preserveAspectRatio="none"><rect x="5" y="0.5" width="6" height="15" rx="1" fill="#2c3038"/><rect x="6.2" y="9" width="3.6" height="3" fill="#8a919b"/></svg>
<div class="t " style="top:193.90px;left:21.80px;letter-spacing:-0.153px;">Devices</div>
<svg class="i" style="left:5px;top:195.40px;width:4px;height:5px" viewBox="0 0 4 5"><path d="M1.1 0.6 L3.0 2.5 L1.1 4.4" stroke="#8a8a8a" stroke-width="0.65" fill="none"/></svg>
<svg class="i" style="left:11.90px;top:202.50px;width:7.00px;height:7.00px" viewBox="0 0 16 16" preserveAspectRatio="none"><rect x="1" y="3" width="14" height="11" fill="#4a5058"/><circle cx="8" cy="8.5" r="3.6" fill="#cfd6dd"/><circle cx="8" cy="8.5" r="1.4" fill="#4a5058"/></svg>
<div class="t " style="top:202.00px;left:21.80px;letter-spacing:-0.051px;">Software</div>
<svg class="i" style="left:5px;top:203.50px;width:4px;height:5px" viewBox="0 0 4 5"><path d="M1.1 0.6 L3.0 2.5 L1.1 4.4" stroke="#8a8a8a" stroke-width="0.65" fill="none"/></svg>
<svg class="i" style="left:11.90px;top:210.60px;width:7.00px;height:7.00px" viewBox="0 0 16 16" preserveAspectRatio="none"><path d="M8 1 L14.5 3 V8 C14.5 12 11 14.5 8 15.5 C5 14.5 1.5 12 1.5 8 V3 Z" fill="#2a6fd0"/><path d="M8 1 L14.5 3 V8 H8 Z" fill="#e23a2a"/><path d="M8 8 H14.5 C14.5 12 11 14.5 8 15.5 Z" fill="#f2c21a"/><path d="M8 8 H1.5 C1.5 12 5 14.5 8 15.5 Z" fill="#3aa83a"/></svg>
<div class="t " style="top:210.10px;left:21.80px;letter-spacing:-0.079px;">Security</div>
<svg class="i" style="left:5px;top:211.60px;width:4px;height:5px" viewBox="0 0 4 5"><path d="M1.1 0.6 L3.0 2.5 L1.1 4.4" stroke="#8a8a8a" stroke-width="0.65" fill="none"/></svg>
<svg class="i" style="left:11.90px;top:218.70px;width:7.00px;height:7.00px" viewBox="0 0 16 16" preserveAspectRatio="none"><rect x="2" y="5" width="12" height="9" fill="#d7dce2"/><rect x="4" y="2" width="8" height="4" fill="#b5bcc5"/><rect x="4" y="8" width="8" height="1.2" fill="#8a929c"/><rect x="4" y="10.5" width="8" height="1.2" fill="#8a929c"/></svg>
<div class="t " style="top:218.20px;left:21.80px;letter-spacing:0.021px;">Config</div>
<svg class="i" style="left:5px;top:219.70px;width:4px;height:5px" viewBox="0 0 4 5"><path d="M1.1 0.6 L3.0 2.5 L1.1 4.4" stroke="#8a8a8a" stroke-width="0.65" fill="none"/></svg>
<svg class="i" style="left:11.90px;top:226.80px;width:7.00px;height:7.00px" viewBox="0 0 16 16" preserveAspectRatio="none"><rect x="1.5" y="2" width="13" height="12" rx="1" fill="#2f86d6"/><rect x="3" y="4" width="10" height="2" fill="#9bd2f8"/><rect x="3" y="7.5" width="10" height="2" fill="#9bd2f8"/></svg>
<div class="t " style="top:226.30px;left:21.80px;letter-spacing:-0.119px;">Database</div>
<svg class="i" style="left:5px;top:227.80px;width:4px;height:5px" viewBox="0 0 4 5"><path d="M1.1 0.6 L3.0 2.5 L1.1 4.4" stroke="#8a8a8a" stroke-width="0.65" fill="none"/></svg>
<svg class="i" style="left:11.90px;top:234.90px;width:7.00px;height:7.00px" viewBox="0 0 16 16" preserveAspectRatio="none"><rect x="1" y="3" width="14" height="11" rx="1" fill="#f29a1f"/><rect x="3" y="5" width="10" height="3" fill="#fbd28a"/></svg>
<div class="t " style="top:234.40px;left:21.80px;letter-spacing:-0.091px;">Benchmark</div>
<svg class="i" style="left:5px;top:235.90px;width:4px;height:5px" viewBox="0 0 4 5"><path d="M1.1 0.6 L3.0 2.5 L1.1 4.4" stroke="#8a8a8a" stroke-width="0.65" fill="none"/></svg>
<div class="r " style="left:88.40px;top:36.40px;width:270.60px;height:369.00px;background:#fff;border-left:0.6px solid #cfcfcf;border-top:0.6px solid #cfcfcf;"></div>
<div class="t " style="top:38.70px;left:91.70px;letter-spacing:-0.089px;">Field</div>
<div class="t " style="top:38.70px;left:181.80px;letter-spacing:-0.022px;">Value</div>
<div class="r " style="left:179.00px;top:37.50px;width:0.50px;height:10.50px;background:#ececec;"></div>
<div class="r " style="left:351.60px;top:37.00px;width:6.90px;height:366.50px;background:#f0f0f0;"></div>
<div class="r " style="left:351.80px;top:45.30px;width:6.60px;height:341.80px;background:#c9c9c9;"></div>
<svg class="i" style="left:351.7px;top:37px;width:6.8px;height:367px" viewBox="0 0 6.8 367"><path d="M1.5 5.2 L3.4 3.3 L5.3 5.2" stroke="#3c3c3c" stroke-width="1.0" fill="none"/><path d="M1.5 361.8 L3.4 363.7 L5.3 361.8" stroke="#3c3c3c" stroke-width="1.0" fill="none"/></svg>
<svg class="i" style="left:91.30px;top:49.00px;width:6.60px;height:6.60px" viewBox="0 0 16 16" preserveAspectRatio="none"><rect x="0.3" y="0.3" width="15.4" height="15.4" fill="#1f5230"/><rect x="3.5" y="3.5" width="9" height="9" fill="#e9eee9"/></svg>
<div class="t " style="top:48.30px;left:99.10px;letter-spacing:-0.124px;">CPU Properties</div>
<svg class="i" style="left:98.10px;top:57.56px;width:6.60px;height:6.60px" viewBox="0 0 16 16" preserveAspectRatio="none"><rect x="0.3" y="0.3" width="15.4" height="15.4" fill="#1f5230"/><rect x="3.5" y="3.5" width="9" height="9" fill="#e9eee9"/></svg>
<div class="t " style="top:56.86px;left:105.90px;letter-spacing:-0.186px;">CPU Type</div>
<div class="t n" style="top:56.86px;left:181.80px;letter-spacing:-0.098px;white-space:pre;">HexaCore AMD Ryzen 5 1600</div>
<svg class="i" style="left:98.10px;top:66.12px;width:6.60px;height:6.60px" viewBox="0 0 16 16" preserveAspectRatio="none"><rect x="0.3" y="0.3" width="15.4" height="15.4" fill="#1f5230"/><rect x="3.5" y="3.5" width="9" height="9" fill="#e9eee9"/></svg>
<div class="t " style="top:65.42px;left:105.90px;letter-spacing:-0.176px;">CPU Alias</div>
<div class="t n" style="top:65.42px;left:181.80px;letter-spacing:-0.030px;white-space:pre;">Summit Ridge</div>
<svg class="i" style="left:98.10px;top:74.68px;width:6.60px;height:6.60px" viewBox="0 0 16 16" preserveAspectRatio="none"><rect x="0.3" y="0.3" width="15.4" height="15.4" fill="#1f5230"/><rect x="3.5" y="3.5" width="9" height="9" fill="#e9eee9"/></svg>
<div class="t " style="top:73.98px;left:105.90px;letter-spacing:-0.103px;">CPU Stepping</div>
<div class="t n" style="top:73.98px;left:181.80px;letter-spacing:-0.202px;white-space:pre;">ZP-B1</div>
<svg class="i" style="left:98.10px;top:83.24px;width:6.60px;height:6.60px" viewBox="0 0 16 16" preserveAspectRatio="none"><rect x="0.3" y="0.3" width="15.4" height="15.4" fill="#1f5230"/><rect x="3.5" y="3.5" width="9" height="9" fill="#e9eee9"/></svg>
<div class="t " style="top:82.54px;left:105.90px;letter-spacing:-0.065px;">Engineering Sample</div>
<div class="t n" style="top:82.54px;left:181.80px;letter-spacing:0.148px;white-space:pre;">No</div>
<svg class="i" style="left:98.10px;top:91.80px;width:6.60px;height:6.60px" viewBox="0 0 16 16" preserveAspectRatio="none"><rect x="0.3" y="0.3" width="15.4" height="15.4" fill="#1f5230"/><rect x="3.5" y="3.5" width="9" height="9" fill="#e9eee9"/></svg>
<div class="t " style="top:91.10px;left:105.90px;letter-spacing:-0.212px;">CPUID CPU Name</div>
<div class="t n" style="top:91.10px;left:181.80px;letter-spacing:-0.109px;white-space:pre;">AMD Ryzen 5 1600 Six-Core Processor</div>
<svg class="i" style="left:98.10px;top:100.36px;width:6.60px;height:6.60px" viewBox="0 0 16 16" preserveAspectRatio="none"><rect x="0.3" y="0.3" width="15.4" height="15.4" fill="#1f5230"/><rect x="3.5" y="3.5" width="9" height="9" fill="#e9eee9"/></svg>
<div class="t " style="top:99.66px;left:105.90px;letter-spacing:-0.173px;">CPUID Revision</div>
<div class="t n" style="top:99.66px;left:181.80px;letter-spacing:-0.094px;white-space:pre;">00800F11h</div>
<svg class="i" style="left:98.10px;top:108.92px;width:6.60px;height:6.60px" viewBox="0 0 16 16" preserveAspectRatio="none"><circle cx="8" cy="8" r="7.4" fill="#e66f1c"/><circle cx="8" cy="8" r="5.2" fill="#fdf1e6"/><path d="M8.6 2.6 L4.6 9 H7.6 L6.8 13.4 L11.4 6.8 H8.4 Z" fill="#e0601a"/></svg>
<div class="t " style="top:108.22px;left:105.90px;letter-spacing:-0.247px;">CPU VID</div>
<div class="t n" style="top:108.22px;left:181.80px;letter-spacing:-0.129px;white-space:pre;">0.9000 V</div>
<svg class="i" style="left:91.30px;top:126.04px;width:6.60px;height:6.60px" viewBox="0 0 16 16" preserveAspectRatio="none"><rect x="0.3" y="0.3" width="15.4" height="15.4" fill="#1f5230"/><rect x="3.5" y="3.5" width="9" height="9" fill="#e9eee9"/></svg>
<div class="t " style="top:125.34px;left:99.10px;letter-spacing:-0.229px;">CPU Speed</div>
<svg class="i" style="left:98.10px;top:134.60px;width:6.60px;height:6.60px" viewBox="0 0 16 16" preserveAspectRatio="none"><rect x="0.3" y="0.3" width="15.4" height="15.4" fill="#1f5230"/><rect x="3.5" y="3.5" width="9" height="9" fill="#e9eee9"/></svg>
<div class="t " style="top:133.90px;left:105.90px;letter-spacing:-0.202px;">CPU Clock</div>
<div class="t n" style="top:133.90px;left:181.80px;letter-spacing:-0.077px;white-space:pre;">1546.7 MHz</div>
<svg class="i" style="left:98.10px;top:143.16px;width:6.60px;height:6.60px" viewBox="0 0 16 16" preserveAspectRatio="none"><rect x="0.3" y="0.3" width="15.4" height="15.4" fill="#1f5230"/><rect x="3.5" y="3.5" width="9" height="9" fill="#e9eee9"/></svg>
<div class="t " style="top:142.46px;left:105.90px;letter-spacing:-0.008px;">CPU Multiplier</div>
<div class="t n" style="top:142.46px;left:181.80px;letter-spacing:-0.163px;white-space:pre;">15.5x</div>
<svg class="i" style="left:98.10px;top:151.72px;width:6.60px;height:6.60px" viewBox="0 0 16 16" preserveAspectRatio="none"><rect x="0.3" y="0.3" width="15.4" height="15.4" fill="#1f5230"/><rect x="3.5" y="3.5" width="9" height="9" fill="#e9eee9"/></svg>
<div class="t " style="top:151.02px;left:105.90px;letter-spacing:-0.456px;">CPU FSB</div>
<div class="t n" style="top:151.02px;left:181.80px;letter-spacing:-0.036px;white-space:pre;">99.8 MHz  (original: 100 MHz)</div>
<svg class="i" style="left:98.10px;top:161.68px;width:6.60px;height:4.20px" viewBox="0 0 16 16" preserveAspectRatio="none"><rect x="0" y="0" width="16" height="13" fill="#2c6a3e"/><rect x="0" y="13" width="16" height="3" fill="#6c9a55"/><rect x="1.5" y="3" width="3" height="6" fill="#0f3319"/><rect x="6.5" y="3" width="3" height="6" fill="#0f3319"/><rect x="11.5" y="3" width="3" height="6" fill="#0f3319"/></svg>
<div class="t " style="top:159.58px;left:105.90px;letter-spacing:-0.041px;">Memory Bus</div>
<div class="t n" style="top:159.58px;left:181.80px;letter-spacing:-0.077px;white-space:pre;">1596.6 MHz</div>
<svg class="i" style="left:98.10px;top:170.24px;width:6.60px;height:4.20px" viewBox="0 0 16 16" preserveAspectRatio="none"><rect x="0" y="0" width="16" height="13" fill="#2c6a3e"/><rect x="0" y="13" width="16" height="3" fill="#6c9a55"/><rect x="1.5" y="3" width="3" height="6" fill="#0f3319"/><rect x="6.5" y="3" width="3" height="6" fill="#0f3319"/><rect x="11.5" y="3" width="3" height="6" fill="#0f3319"/></svg>
<div class="t " style="top:168.14px;left:105.90px;letter-spacing:-0.220px;">DRAM:FSB Ratio</div>
<div class="t n" style="top:168.14px;left:181.80px;letter-spacing:-0.149px;white-space:pre;">48:3</div>
<svg class="i" style="left:91.60px;top:185.86px;width:5.80px;height:6.80px" viewBox="0 0 16 16" preserveAspectRatio="none"><rect x="1.8" y="0.5" width="12.4" height="15" fill="#2b2b2b"/><rect x="0.2" y="1.6" width="15.6" height="1.7" fill="#3d3d3d"/><rect x="0.2" y="5" width="15.6" height="1.7" fill="#3d3d3d"/><rect x="0.2" y="8.4" width="15.6" height="1.7" fill="#3d3d3d"/><rect x="0.2" y="11.8" width="15.6" height="1.7" fill="#3d3d3d"/><rect x="4.6" y="2.5" width="6.8" height="11" fill="#4a4a4a"/></svg>
<div class="t " style="top:185.26px;left:99.10px;letter-spacing:-0.272px;">CPU Cache</div>
<svg class="i" style="left:98.40px;top:194.42px;width:5.80px;height:6.80px" viewBox="0 0 16 16" preserveAspectRatio="none"><rect x="1.8" y="0.5" width="12.4" height="15" fill="#2b2b2b"/><rect x="0.2" y="1.6" width="15.6" height="1.7" fill="#3d3d3d"/><rect x="0.2" y="5" width="15.6" height="1.7" fill="#3d3d3d"/><rect x="0.2" y="8.4" width="15.6" height="1.7" fill="#3d3d3d"/><rect x="0.2" y="11.8" width="15.6" height="1.7" fill="#3d3d3d"/><rect x="4.6" y="2.5" width="6.8" height="11" fill="#4a4a4a"/></svg>
<div class="t " style="top:193.82px;left:105.90px;letter-spacing:-0.162px;">L1 Code Cache</div>
<div class="t n" style="top:193.82px;left:181.80px;letter-spacing:-0.091px;white-space:pre;">64 KB per core</div>
<svg class="i" style="left:98.40px;top:202.98px;width:5.80px;height:6.80px" viewBox="0 0 16 16" preserveAspectRatio="none"><rect x="1.8" y="0.5" width="12.4" height="15" fill="#2b2b2b"/><rect x="0.2" y="1.6" width="15.6" height="1.7" fill="#3d3d3d"/><rect x="0.2" y="5" width="15.6" height="1.7" fill="#3d3d3d"/><rect x="0.2" y="8.4" width="15.6" height="1.7" fill="#3d3d3d"/><rect x="0.2" y="11.8" width="15.6" height="1.7" fill="#3d3d3d"/><rect x="4.6" y="2.5" width="6.8" height="11" fill="#4a4a4a"/></svg>
<div class="t " style="top:202.38px;left:105.90px;letter-spacing:-0.154px;">L1 Data Cache</div>
<div class="t n" style="top:202.38px;left:181.80px;letter-spacing:-0.091px;white-space:pre;">32 KB per core</div>
<svg class="i" style="left:98.40px;top:211.54px;width:5.80px;height:6.80px" viewBox="0 0 16 16" preserveAspectRatio="none"><rect x="1.8" y="0.5" width="12.4" height="15" fill="#2b2b2b"/><rect x="0.2" y="1.6" width="15.6" height="1.7" fill="#3d3d3d"/><rect x="0.2" y="5" width="15.6" height="1.7" fill="#3d3d3d"/><rect x="0.2" y="8.4" width="15.6" height="1.7" fill="#3d3d3d"/><rect x="0.2" y="11.8" width="15.6" height="1.7" fill="#3d3d3d"/><rect x="4.6" y="2.5" width="6.8" height="11" fill="#4a4a4a"/></svg>
<div class="t " style="top:210.94px;left:105.90px;letter-spacing:-0.212px;">L2 Cache</div>
<div class="t n" style="top:210.94px;left:181.80px;letter-spacing:-0.120px;white-space:pre;">512 KB per core  (On-Die, ECC, Full-Speed)</div>
<svg class="i" style="left:98.40px;top:220.10px;width:5.80px;height:6.80px" viewBox="0 0 16 16" preserveAspectRatio="none"><rect x="1.8" y="0.5" width="12.4" height="15" fill="#2b2b2b"/><rect x="0.2" y="1.6" width="15.6" height="1.7" fill="#3d3d3d"/><rect x="0.2" y="5" width="15.6" height="1.7" fill="#3d3d3d"/><rect x="0.2" y="8.4" width="15.6" height="1.7" fill="#3d3d3d"/><rect x="0.2" y="11.8" width="15.6" height="1.7" fill="#3d3d3d"/><rect x="4.6" y="2.5" width="6.8" height="11" fill="#4a4a4a"/></svg>
<div class="t " style="top:219.50px;left:105.90px;letter-spacing:-0.212px;">L3 Cache</div>
<div class="t n" style="top:219.50px;left:181.80px;letter-spacing:-0.070px;white-space:pre;">16 MB</div>
<svg class="i" style="left:91.20px;top:237.32px;width:7.00px;height:6.60px" viewBox="0 0 16 16" preserveAspectRatio="none"><rect x="0" y="0.5" width="16" height="15" fill="#2f8a3e"/><rect x="2" y="2.6" width="5" height="4.6" fill="#eaf6ea"/><rect x="9" y="2.6" width="5" height="4.6" fill="#eaf6ea"/><rect x="2" y="9.4" width="8" height="3.8" fill="#d4ecd4"/><rect x="11.4" y="9.4" width="2.6" height="3.8" fill="#d4ecd4"/></svg>
<div class="t " style="top:236.62px;left:99.10px;letter-spacing:0.031px;">Motherboard Properties</div>
<svg class="i" style="left:98.00px;top:245.88px;width:7.00px;height:6.60px" viewBox="0 0 16 16" preserveAspectRatio="none"><rect x="0" y="0.5" width="16" height="15" fill="#2f8a3e"/><rect x="2" y="2.6" width="5" height="4.6" fill="#eaf6ea"/><rect x="9" y="2.6" width="5" height="4.6" fill="#eaf6ea"/><rect x="2" y="9.4" width="8" height="3.8" fill="#d4ecd4"/><rect x="11.4" y="9.4" width="2.6" height="3.8" fill="#d4ecd4"/></svg>
<div class="t " style="top:245.18px;left:105.90px;letter-spacing:0.065px;">Motherboard ID</div>
<div class="t n" style="top:245.18px;left:181.80px;letter-spacing:-0.130px;white-space:pre;">63-0100-000001-00101111-091015-Chipset$0AAAA000_BIOS DATE: 0...</div>
<svg class="i" style="left:98.00px;top:254.44px;width:7.00px;height:6.60px" viewBox="0 0 16 16" preserveAspectRatio="none"><rect x="0" y="0.5" width="16" height="15" fill="#2f8a3e"/><rect x="2" y="2.6" width="5" height="4.6" fill="#eaf6ea"/><rect x="9" y="2.6" width="5" height="4.6" fill="#eaf6ea"/><rect x="2" y="9.4" width="8" height="3.8" fill="#d4ecd4"/><rect x="11.4" y="9.4" width="2.6" height="3.8" fill="#d4ecd4"/></svg>
<div class="t " style="top:253.74px;left:105.90px;letter-spacing:0.059px;">Motherboard Name</div>
<div class="t n" style="top:253.74px;left:181.80px;letter-spacing:-0.135px;white-space:pre;">ASRock AB350M  (1 PCI-E x1, 1 PCI-E x16, 1 M.2, 2 DDR4 DIMM, Aud...</div>
<svg class="i" style="left:91.60px;top:271.46px;width:5.80px;height:6.80px" viewBox="0 0 16 16" preserveAspectRatio="none"><rect x="1.8" y="0.5" width="12.4" height="15" fill="#2b2b2b"/><rect x="0.2" y="1.6" width="15.6" height="1.7" fill="#3d3d3d"/><rect x="0.2" y="5" width="15.6" height="1.7" fill="#3d3d3d"/><rect x="0.2" y="8.4" width="15.6" height="1.7" fill="#3d3d3d"/><rect x="0.2" y="11.8" width="15.6" height="1.7" fill="#3d3d3d"/><rect x="4.6" y="2.5" width="6.8" height="11" fill="#4a4a4a"/></svg>
<div class="t " style="top:270.86px;left:99.10px;letter-spacing:-0.050px;">Chipset Properties</div>
<svg class="i" style="left:98.40px;top:280.02px;width:5.80px;height:6.80px" viewBox="0 0 16 16" preserveAspectRatio="none"><rect x="1.8" y="0.5" width="12.4" height="15" fill="#2b2b2b"/><rect x="0.2" y="1.6" width="15.6" height="1.7" fill="#3d3d3d"/><rect x="0.2" y="5" width="15.6" height="1.7" fill="#3d3d3d"/><rect x="0.2" y="8.4" width="15.6" height="1.7" fill="#3d3d3d"/><rect x="0.2" y="11.8" width="15.6" height="1.7" fill="#3d3d3d"/><rect x="4.6" y="2.5" width="6.8" height="11" fill="#4a4a4a"/></svg>
<div class="t " style="top:279.42px;left:105.90px;letter-spacing:0.032px;">Motherboard Chipset</div>
<div class="t n" style="top:279.42px;left:181.80px;letter-spacing:-0.058px;white-space:pre;">AMD B350, AMD Taishan, AMD K17 IMC</div>
<svg class="i" style="left:98.10px;top:290.08px;width:6.60px;height:4.20px" viewBox="0 0 16 16" preserveAspectRatio="none"><rect x="0" y="0" width="16" height="13" fill="#2c6a3e"/><rect x="0" y="13" width="16" height="3" fill="#6c9a55"/><rect x="1.5" y="3" width="3" height="6" fill="#0f3319"/><rect x="6.5" y="3" width="3" height="6" fill="#0f3319"/><rect x="11.5" y="3" width="3" height="6" fill="#0f3319"/></svg>
<div class="t " style="top:287.98px;left:105.90px;letter-spacing:0.032px;">Memory Timings</div>
<div class="t n" style="top:287.98px;left:181.80px;letter-spacing:-0.143px;white-space:pre;">14-15-15-28  (CL-RCD-RP-RAS)</div>
<svg class="i" style="left:98.10px;top:298.64px;width:6.60px;height:4.20px" viewBox="0 0 16 16" preserveAspectRatio="none"><rect x="0" y="0" width="16" height="13" fill="#2c6a3e"/><rect x="0" y="13" width="16" height="3" fill="#6c9a55"/><rect x="1.5" y="3" width="3" height="6" fill="#0f3319"/><rect x="6.5" y="3" width="3" height="6" fill="#0f3319"/><rect x="11.5" y="3" width="3" height="6" fill="#0f3319"/></svg>
<div class="t " style="top:296.54px;left:105.90px;letter-spacing:-0.145px;">Command Rate (CR)</div>
<div class="t n" style="top:296.54px;left:181.80px;letter-spacing:-0.276px;white-space:pre;">1T</div>
<svg class="i" style="left:98.10px;top:307.20px;width:6.60px;height:4.20px" viewBox="0 0 16 16" preserveAspectRatio="none"><rect x="0" y="0" width="16" height="13" fill="#2c6a3e"/><rect x="0" y="13" width="16" height="3" fill="#6c9a55"/><rect x="1.5" y="3" width="3" height="6" fill="#0f3319"/><rect x="6.5" y="3" width="3" height="6" fill="#0f3319"/><rect x="11.5" y="3" width="3" height="6" fill="#0f3319"/></svg>
<div class="t " style="top:305.10px;left:105.90px;letter-spacing:-0.070px;">DIMM1: Kingston HyperX K...</div>
<div class="t n" style="top:305.10px;left:181.80px;letter-spacing:-0.143px;white-space:pre;">8 GB DDR4-2400 DDR4 SDRAM  (18-17-17-39 @ 1200 MHz)  (17-17-1...</div>
<svg class="i" style="left:91.60px;top:322.82px;width:5.80px;height:6.80px" viewBox="0 0 16 16" preserveAspectRatio="none"><rect x="1.8" y="0.5" width="12.4" height="15" fill="#2b2b2b"/><rect x="0.2" y="1.6" width="15.6" height="1.7" fill="#3d3d3d"/><rect x="0.2" y="5" width="15.6" height="1.7" fill="#3d3d3d"/><rect x="0.2" y="8.4" width="15.6" height="1.7" fill="#3d3d3d"/><rect x="0.2" y="11.8" width="15.6" height="1.7" fill="#3d3d3d"/><rect x="4.6" y="2.5" width="6.8" height="11" fill="#4a4a4a"/></svg>
<div class="t " style="top:322.22px;left:99.10px;letter-spacing:-0.122px;">BIOS Properties</div>
<svg class="i" style="left:97.90px;top:331.38px;width:7.20px;height:6.80px" viewBox="0 0 16 16" preserveAspectRatio="none"><rect x="0.5" y="1.5" width="15" height="10.5" rx="1" fill="#2f8ad8"/><rect x="1.8" y="2.8" width="12.4" height="7.6" fill="#6cc0f5"/><rect x="6" y="12" width="4" height="1.6" fill="#8a98a5"/><rect x="3.5" y="13.4" width="9" height="1.6" fill="#9aa7b3"/></svg>
<div class="t " style="top:330.78px;left:105.90px;letter-spacing:-0.161px;">System BIOS Date</div>
<div class="t n" style="top:330.78px;left:181.80px;letter-spacing:0.047px;white-space:pre;">01/16/2018</div>
<svg class="i" style="left:97.90px;top:339.94px;width:7.20px;height:6.80px" viewBox="0 0 16 16" preserveAspectRatio="none"><rect x="0.3" y="1" width="15.4" height="11.4" rx="0.8" fill="#1d62ad"/><rect x="1.7" y="2.4" width="12.6" height="8.6" fill="#55b4ee"/><path d="M5 11 C7 8.6 10 8.2 14.3 8.8 V11 Z" fill="#5c9a3a"/><path d="M8 11 C10 9.8 12 9.6 14.3 10 V11 Z" fill="#e0b030"/><rect x="6" y="12.4" width="4" height="1.6" fill="#6f7f8e"/><rect x="3.5" y="13.8" width="9" height="1.7" fill="#8b99a6"/></svg>
<div class="t " style="top:339.34px;left:105.90px;letter-spacing:-0.103px;">Video BIOS Date</div>
<div class="t n" style="top:339.34px;left:181.80px;letter-spacing:0.081px;white-space:pre;">12/03/13</div>
<svg class="i" style="left:98.40px;top:348.50px;width:5.80px;height:6.80px" viewBox="0 0 16 16" preserveAspectRatio="none"><rect x="1.8" y="0.5" width="12.4" height="15" fill="#2b2b2b"/><rect x="0.2" y="1.6" width="15.6" height="1.7" fill="#3d3d3d"/><rect x="0.2" y="5" width="15.6" height="1.7" fill="#3d3d3d"/><rect x="0.2" y="8.4" width="15.6" height="1.7" fill="#3d3d3d"/><rect x="0.2" y="11.8" width="15.6" height="1.7" fill="#3d3d3d"/><rect x="4.6" y="2.5" width="6.8" height="11" fill="#4a4a4a"/></svg>
<div class="t " style="top:347.90px;left:105.90px;letter-spacing:-0.088px;">DMI BIOS Version</div>
<div class="t n" style="top:347.90px;left:181.80px;letter-spacing:-0.232px;white-space:pre;">P4.40</div>
<svg class="i" style="left:91.10px;top:365.62px;width:7.20px;height:6.80px" viewBox="0 0 16 16" preserveAspectRatio="none"><rect x="0.3" y="1" width="15.4" height="11.4" rx="0.8" fill="#1d62ad"/><rect x="1.7" y="2.4" width="12.6" height="8.6" fill="#55b4ee"/><path d="M5 11 C7 8.6 10 8.2 14.3 8.8 V11 Z" fill="#5c9a3a"/><path d="M8 11 C10 9.8 12 9.6 14.3 10 V11 Z" fill="#e0b030"/><rect x="6" y="12.4" width="4" height="1.6" fill="#6f7f8e"/><rect x="3.5" y="13.8" width="9" height="1.7" fill="#8b99a6"/></svg>
<div class="t " style="top:365.02px;left:99.10px;letter-spacing:-0.092px;">Graphics Processor Properties</div>
<svg class="i" style="left:97.90px;top:374.18px;width:7.20px;height:6.80px" viewBox="0 0 16 16" preserveAspectRatio="none"><rect x="0.3" y="1" width="15.4" height="11.4" rx="0.8" fill="#1d62ad"/><rect x="1.7" y="2.4" width="12.6" height="8.6" fill="#55b4ee"/><path d="M5 11 C7 8.6 10 8.2 14.3 8.8 V11 Z" fill="#5c9a3a"/><path d="M8 11 C10 9.8 12 9.6 14.3 10 V11 Z" fill="#e0b030"/><rect x="6" y="12.4" width="4" height="1.6" fill="#6f7f8e"/><rect x="3.5" y="13.8" width="9" height="1.7" fill="#8b99a6"/></svg>
<div class="t " style="top:373.58px;left:105.90px;letter-spacing:0.045px;">Video Adapter</div>
<div class="t n" style="top:373.58px;left:181.80px;letter-spacing:-0.081px;white-space:pre;">MSI N780Ti (MS-V298)</div>
<svg class="i" style="left:97.90px;top:382.74px;width:7.20px;height:6.80px" viewBox="0 0 16 16" preserveAspectRatio="none"><rect x="0.3" y="1" width="15.4" height="11.4" rx="0.8" fill="#1d62ad"/><rect x="1.7" y="2.4" width="12.6" height="8.6" fill="#55b4ee"/><path d="M5 11 C7 8.6 10 8.2 14.3 8.8 V11 Z" fill="#5c9a3a"/><path d="M8 11 C10 9.8 12 9.6 14.3 10 V11 Z" fill="#e0b030"/><rect x="6" y="12.4" width="4" height="1.6" fill="#6f7f8e"/><rect x="3.5" y="13.8" width="9" height="1.7" fill="#8b99a6"/></svg>
<div class="t " style="top:382.14px;left:105.90px;letter-spacing:-0.140px;">GPU Code Name</div>
<div class="t n" style="top:382.14px;left:181.80px;letter-spacing:-0.174px;white-space:pre;">GK110B  (PCI Express 3.0 x16 10DE / 100A, Rev B1)</div>
<svg class="i" style="left:97.90px;top:391.30px;width:7.20px;height:6.80px" viewBox="0 0 16 16" preserveAspectRatio="none"><rect x="0.3" y="1" width="15.4" height="11.4" rx="0.8" fill="#1d62ad"/><rect x="1.7" y="2.4" width="12.6" height="8.6" fill="#55b4ee"/><path d="M5 11 C7 8.6 10 8.2 14.3 8.8 V11 Z" fill="#5c9a3a"/><path d="M8 11 C10 9.8 12 9.6 14.3 10 V11 Z" fill="#e0b030"/><rect x="6" y="12.4" width="4" height="1.6" fill="#6f7f8e"/><rect x="3.5" y="13.8" width="9" height="1.7" fill="#8b99a6"/></svg>
<div class="t " style="top:390.70px;left:105.90px;letter-spacing:-0.196px;">GPU Clock</div>
<div class="t n" style="top:390.70px;left:181.80px;letter-spacing:-0.037px;white-space:pre;">324 MHz</div>
<svg class="i" style="left:98.10px;top:401.36px;width:6.60px;height:4.20px" viewBox="0 0 16 16" preserveAspectRatio="none"><rect x="0" y="0" width="16" height="13" fill="#2c6a3e"/><rect x="0" y="13" width="16" height="3" fill="#6c9a55"/><rect x="1.5" y="3" width="3" height="6" fill="#0f3319"/><rect x="6.5" y="3" width="3" height="6" fill="#0f3319"/><rect x="11.5" y="3" width="3" height="6" fill="#0f3319"/></svg>
<div class="t " style="top:399.26px;left:105.90px;letter-spacing:-0.005px;">Memory Clock</div>
<div class="t n" style="top:399.26px;left:181.80px;letter-spacing:-0.037px;white-space:pre;">162 MHz</div>
<div class="win" style="left:360.8px;top:1.2px;width:231.4px;height:147px;background:#fff;border:0.5px solid #c9c9c9;box-shadow:0 1.2px 5.5px rgba(0,0,0,.40);overflow:visible;"></div>
<svg class="i" style="left:364.6px;top:4px;width:7px;height:7px" viewBox="0 0 14 14"><circle cx="8.6" cy="5.4" r="4.6" fill="#7fc0f0"/><circle cx="8.8" cy="5.2" r="2.4" fill="#eaf6ff"/><path d="M1 12.5 L5 8.5 L6.5 10 L2.6 13.6 Z" fill="#c3ccd4"/></svg>
<div class="t g" style="top:3.80px;left:373.40px;letter-spacing:-0.100px;color:#a6a6a6;">Finished - LinX v0.7.0</div>
<svg class="i" style="left:533px;top:1.6px;width:60px;height:12px" viewBox="0 0 60 12"><path d="M5.6 6.0 H10.3" stroke="#8a8a8a" stroke-width="0.55" fill="none"/><rect x="25.7" y="3.8" width="4.5" height="4.5" stroke="#e0e0e0" stroke-width="0.55" fill="none"/><path d="M46.3 3.7 L50.9 8.3 M50.9 3.7 L46.3 8.3" stroke="#8a8a8a" stroke-width="0.55" fill="none"/></svg>
<div class="t m lx" style="top:15.30px;left:363.80px;color:#777;">File</div>
<div class="t m lx" style="top:15.30px;left:377.80px;color:#777;">Settings</div>
<div class="t m lx" style="top:15.30px;left:403.00px;color:#777;">Graphs</div>
<div class="t m lx" style="top:15.30px;left:426.00px;color:#777;">?</div>
<div class="r " style="left:361.30px;top:23.00px;width:230.80px;height:27.80px;background:#f0f0f0;"></div>
<div class="t lx" style="top:26.80px;left:362.40px;">Problem size:</div>
<div class="r " style="left:393.40px;top:26.10px;width:27.00px;height:9.40px;background:#fff;border:0.6px solid #a4a4a4;"></div>
<div class="t lx" style="top:26.80px;left:395.20px;">28326</div>
<svg class="i" style="left:413.60px;top:29.1px;width:4.8px;height:3.6px" viewBox="0 0 4.8 3.6"><path d="M0.5 0.8 L2.4 2.7 L4.3 0.8" stroke="#333" stroke-width="0.75" fill="none"/></svg>
<div class="t lx" style="top:26.80px;left:435.90px;">Memory (MiB):</div>
<div class="r " style="left:469.00px;top:26.10px;width:25.00px;height:9.40px;background:#fff;border:0.6px solid #a4a4a4;"></div>
<div class="t lx" style="top:26.80px;left:470.80px;">6144</div>
<svg class="i" style="left:487.20px;top:29.1px;width:4.8px;height:3.6px" viewBox="0 0 4.8 3.6"><path d="M0.5 0.8 L2.4 2.7 L4.3 0.8" stroke="#333" stroke-width="0.75" fill="none"/></svg>
<div class="t lx" style="top:26.80px;left:498.70px;">All</div>
<div class="t lx" style="top:26.80px;left:527.50px;">Run:</div>
<div class="r " style="left:540.20px;top:26.10px;width:22.60px;height:9.40px;background:#fff;border:0.6px solid #a4a4a4;"></div>
<div class="t lx" style="top:26.80px;left:542.00px;">10</div>
<svg class="i" style="left:556.00px;top:29.1px;width:4.8px;height:3.6px" viewBox="0 0 4.8 3.6"><path d="M0.5 0.8 L2.4 2.7 L4.3 0.8" stroke="#333" stroke-width="0.75" fill="none"/></svg>
<div class="r " style="left:565.40px;top:26.10px;width:24.30px;height:9.40px;background:#e1e1e1;border:0.6px solid #b9b9b9;"></div>
<div class="t lx" style="top:26.80px;left:567.20px;">times</div>
<svg class="i" style="left:582.90px;top:29.1px;width:4.8px;height:3.6px" viewBox="0 0 4.8 3.6"><path d="M0.5 0.8 L2.4 2.7 L4.3 0.8" stroke="#333" stroke-width="0.75" fill="none"/></svg>
<div class="btn" style="left:363.40px;top:38.30px;width:32.40px;height:9.40px;"><span class="bt" style="letter-spacing:0.000px;font-size:5.0px">Start</span></div>
<div class="r " style="left:399.20px;top:38.20px;width:153.70px;height:9.20px;background:#6496d8;border:0.6px solid #4d80c6;"></div>
<div class="t lx" style="top:39.20px;left:426.40px;width:100px;text-align:center;color:#0d1a2b;">Finished without errors in 22 m 25 s</div>
<div class="btn" style="left:557.10px;top:38.30px;width:32.60px;height:9.40px;background:#cdcdcd;border-color:#d0d0d0;color:#9a9a9a;"><span class="bt" style="letter-spacing:0.000px;font-size:5.0px">Stop</span></div>
<div class="r " style="left:361.30px;top:50.80px;width:230.80px;height:88.00px;background:#fff;"></div>
<div class="r " style="left:373.50px;top:51.00px;width:0.50px;height:87.50px;background:#f3f3f3;"></div>
<div class="r " style="left:396.40px;top:51.00px;width:0.50px;height:87.50px;background:#f3f3f3;"></div>
<div class="r " style="left:418.40px;top:51.00px;width:0.50px;height:87.50px;background:#f3f3f3;"></div>
<div class="r " style="left:436.70px;top:51.00px;width:0.50px;height:87.50px;background:#f3f3f3;"></div>
<div class="r " style="left:465.20px;top:51.00px;width:0.50px;height:87.50px;background:#f3f3f3;"></div>
<div class="r " style="left:497.30px;top:51.00px;width:0.50px;height:87.50px;background:#f3f3f3;"></div>
<div class="r " style="left:540.60px;top:51.00px;width:0.50px;height:87.50px;background:#f3f3f3;"></div>
<div class="r " style="left:584.70px;top:51.00px;width:0.50px;height:87.50px;background:#f3f3f3;"></div>
<div class="r " style="left:361.30px;top:62.00px;width:223.40px;height:7.00px;background:#dadada;"></div>
<div class="t lx" style="top:52.30px;left:364.70px;">#</div>
<div class="t lx" style="top:52.30px;left:334.90px;width:100px;text-align:center;">Size</div>
<div class="t lx" style="top:52.30px;left:357.30px;width:100px;text-align:center;">LDA</div>
<div class="t lx" style="top:52.30px;left:377.60px;width:100px;text-align:center;">Align</div>
<div class="t lx" style="top:52.30px;left:401.00px;width:100px;text-align:center;">Time</div>
<div class="t lx" style="top:52.30px;left:431.60px;width:100px;text-align:center;">GFlops</div>
<div class="t lx" style="top:52.30px;left:468.80px;width:100px;text-align:center;">Residual</div>
<div class="t lx" style="top:52.30px;left:512.40px;width:100px;text-align:center;">Residual (norm.)</div>
<div class="t lx" style="top:62.30px;left:363.60px;">1</div>
<div class="t lx" style="top:62.30px;left:334.90px;width:100px;text-align:center;">28326</div>
<div class="t lx" style="top:62.30px;left:357.30px;width:100px;text-align:center;">28328</div>
<div class="t lx" style="top:62.30px;left:377.60px;width:100px;text-align:center;">4</div>
<div class="t lx" style="top:62.30px;left:401.00px;width:100px;text-align:center;">100.962</div>
<div class="t lx" style="top:62.30px;left:431.60px;width:100px;text-align:center;">150.0903</div>
<div class="t lx" style="top:62.30px;left:468.80px;width:100px;text-align:center;">7.851889e-10</div>
<div class="t lx" style="top:62.30px;left:512.40px;width:100px;text-align:center;">3.481467e-02</div>
<div class="t lx" style="top:69.94px;left:363.60px;">2</div>
<div class="t lx" style="top:69.94px;left:334.90px;width:100px;text-align:center;">28326</div>
<div class="t lx" style="top:69.94px;left:357.30px;width:100px;text-align:center;">28328</div>
<div class="t lx" style="top:69.94px;left:377.60px;width:100px;text-align:center;">4</div>
<div class="t lx" style="top:69.94px;left:401.00px;width:100px;text-align:center;">101.003</div>
<div class="t lx" style="top:69.94px;left:431.60px;width:100px;text-align:center;">150.0291</div>
<div class="t lx" style="top:69.94px;left:468.80px;width:100px;text-align:center;">7.851889e-10</div>
<div class="t lx" style="top:69.94px;left:512.40px;width:100px;text-align:center;">3.481467e-02</div>
<div class="t lx" style="top:77.58px;left:363.60px;">3</div>
<div class="t lx" style="top:77.58px;left:334.90px;width:100px;text-align:center;">28326</div>
<div class="t lx" style="top:77.58px;left:357.30px;width:100px;text-align:center;">28328</div>
<div class="t lx" style="top:77.58px;left:377.60px;width:100px;text-align:center;">4</div>
<div class="t lx" style="top:77.58px;left:401.00px;width:100px;text-align:center;">101.008</div>
<div class="t lx" style="top:77.58px;left:431.60px;width:100px;text-align:center;">150.0213</div>
<div class="t lx" style="top:77.58px;left:468.80px;width:100px;text-align:center;">7.851889e-10</div>
<div class="t lx" style="top:77.58px;left:512.40px;width:100px;text-align:center;">3.481467e-02</div>
<div class="t lx" style="top:85.22px;left:363.60px;">4</div>
<div class="t lx" style="top:85.22px;left:334.90px;width:100px;text-align:center;">28326</div>
<div class="t lx" style="top:85.22px;left:357.30px;width:100px;text-align:center;">28328</div>
<div class="t lx" style="top:85.22px;left:377.60px;width:100px;text-align:center;">4</div>
<div class="t lx" style="top:85.22px;left:401.00px;width:100px;text-align:center;">101.223</div>
<div class="t lx" style="top:85.22px;left:431.60px;width:100px;text-align:center;">149.7029</div>
<div class="t lx" style="top:85.22px;left:468.80px;width:100px;text-align:center;">7.851889e-10</div>
<div class="t lx" style="top:85.22px;left:512.40px;width:100px;text-align:center;">3.481467e-02</div>
<div class="t lx" style="top:92.86px;left:363.60px;">5</div>
<div class="t lx" style="top:92.86px;left:334.90px;width:100px;text-align:center;">28326</div>
<div class="t lx" style="top:92.86px;left:357.30px;width:100px;text-align:center;">28328</div>
<div class="t lx" style="top:92.86px;left:377.60px;width:100px;text-align:center;">4</div>
<div class="t lx" style="top:92.86px;left:401.00px;width:100px;text-align:center;">101.318</div>
<div class="t lx" style="top:92.86px;left:431.60px;width:100px;text-align:center;">149.5627</div>
<div class="t lx" style="top:92.86px;left:468.80px;width:100px;text-align:center;">7.851889e-10</div>
<div class="t lx" style="top:92.86px;left:512.40px;width:100px;text-align:center;">3.481467e-02</div>
<div class="t lx" style="top:100.50px;left:363.60px;">6</div>
<div class="t lx" style="top:100.50px;left:334.90px;width:100px;text-align:center;">28326</div>
<div class="t lx" style="top:100.50px;left:357.30px;width:100px;text-align:center;">28328</div>
<div class="t lx" style="top:100.50px;left:377.60px;width:100px;text-align:center;">4</div>
<div class="t lx" style="top:100.50px;left:401.00px;width:100px;text-align:center;">101.381</div>
<div class="t lx" style="top:100.50px;left:431.60px;width:100px;text-align:center;">149.4698</div>
<div class="t lx" style="top:100.50px;left:468.80px;width:100px;text-align:center;">7.851889e-10</div>
<div class="t lx" style="top:100.50px;left:512.40px;width:100px;text-align:center;">3.481467e-02</div>
<div class="t lx" style="top:108.14px;left:363.60px;">7</div>
<div class="t lx" style="top:108.14px;left:334.90px;width:100px;text-align:center;">28326</div>
<div class="t lx" style="top:108.14px;left:357.30px;width:100px;text-align:center;">28328</div>
<div class="t lx" style="top:108.14px;left:377.60px;width:100px;text-align:center;">4</div>
<div class="t lx" style="top:108.14px;left:401.00px;width:100px;text-align:center;">101.157</div>
<div class="t lx" style="top:108.14px;left:431.60px;width:100px;text-align:center;">149.8016</div>
<div class="t lx" style="top:108.14px;left:468.80px;width:100px;text-align:center;">7.851889e-10</div>
<div class="t lx" style="top:108.14px;left:512.40px;width:100px;text-align:center;">3.481467e-02</div>
<div class="t lx" style="top:115.78px;left:363.60px;">8</div>
<div class="t lx" style="top:115.78px;left:334.90px;width:100px;text-align:center;">28326</div>
<div class="t lx" style="top:115.78px;left:357.30px;width:100px;text-align:center;">28328</div>
<div class="t lx" style="top:115.78px;left:377.60px;width:100px;text-align:center;">4</div>
<div class="t lx" style="top:115.78px;left:401.00px;width:100px;text-align:center;">101.071</div>
<div class="t lx" style="top:115.78px;left:431.60px;width:100px;text-align:center;">149.9282</div>
<div class="t lx" style="top:115.78px;left:468.80px;width:100px;text-align:center;">7.851889e-10</div>
<div class="t lx" style="top:115.78px;left:512.40px;width:100px;text-align:center;">3.481467e-02</div>
<div class="t lx" style="top:123.42px;left:363.60px;">9</div>
<div class="t lx" style="top:123.42px;left:334.90px;width:100px;text-align:center;">28326</div>
<div class="t lx" style="top:123.42px;left:357.30px;width:100px;text-align:center;">28328</div>
<div class="t lx" style="top:123.42px;left:377.60px;width:100px;text-align:center;">4</div>
<div class="t lx" style="top:123.42px;left:401.00px;width:100px;text-align:center;">101.115</div>
<div class="t lx" style="top:123.42px;left:431.60px;width:100px;text-align:center;">149.8624</div>
<div class="t lx" style="top:123.42px;left:468.80px;width:100px;text-align:center;">7.851889e-10</div>
<div class="t lx" style="top:123.42px;left:512.40px;width:100px;text-align:center;">3.481467e-02</div>
<div class="t lx" style="top:131.06px;left:363.60px;">10</div>
<div class="t lx" style="top:131.06px;left:334.90px;width:100px;text-align:center;">28326</div>
<div class="t lx" style="top:131.06px;left:357.30px;width:100px;text-align:center;">28328</div>
<div class="t lx" style="top:131.06px;left:377.60px;width:100px;text-align:center;">4</div>
<div class="t lx" style="top:131.06px;left:401.00px;width:100px;text-align:center;">101.085</div>
<div class="t lx" style="top:131.06px;left:431.60px;width:100px;text-align:center;">149.9072</div>
<div class="t lx" style="top:131.06px;left:468.80px;width:100px;text-align:center;">7.851889e-10</div>
<div class="t lx" style="top:131.06px;left:512.40px;width:100px;text-align:center;">3.481467e-02</div>
<div class="r " style="left:361.30px;top:138.90px;width:230.80px;height:9.10px;background:#f0f0f0;"></div>
<div class="r " style="left:384.30px;top:140.50px;width:0.50px;height:6.00px;background:#e7e7e7;"></div>
<div class="r " style="left:405.30px;top:140.50px;width:0.50px;height:6.00px;background:#e7e7e7;"></div>
<div class="r " style="left:435.00px;top:140.50px;width:0.50px;height:6.00px;background:#e7e7e7;"></div>
<div class="r " style="left:500.80px;top:140.50px;width:0.50px;height:6.00px;background:#e7e7e7;"></div>
<div class="r " style="left:576.50px;top:140.50px;width:0.50px;height:6.00px;background:#e7e7e7;"></div>
<div class="t lx" style="top:139.60px;left:322.60px;width:100px;text-align:center;">10/10</div>
<div class="t lx" style="top:139.60px;left:345.20px;width:100px;text-align:center;">64-bit</div>
<div class="t lx" style="top:139.60px;left:370.20px;width:100px;text-align:center;">12 Threads</div>
<div class="t lx" style="top:139.60px;left:418.60px;width:100px;text-align:center;">150.0903 GFlops Peak</div>
<div class="t lx" style="top:139.60px;left:490.60px;width:100px;text-align:center;">AMD Ryzen 5 1600 Six-Core</div>
<div class="t lx" style="top:139.60px;left:535.60px;width:100px;text-align:center;">Log ›</div>
<div class="r " style="left:0.00px;top:403.40px;width:720.00px;height:1.00px;background:#b0b0b0;"></div>
<div class="r " style="left:0.00px;top:404.40px;width:720.00px;height:0.60px;background:#dcdcdc;"></div>
</body></html>
